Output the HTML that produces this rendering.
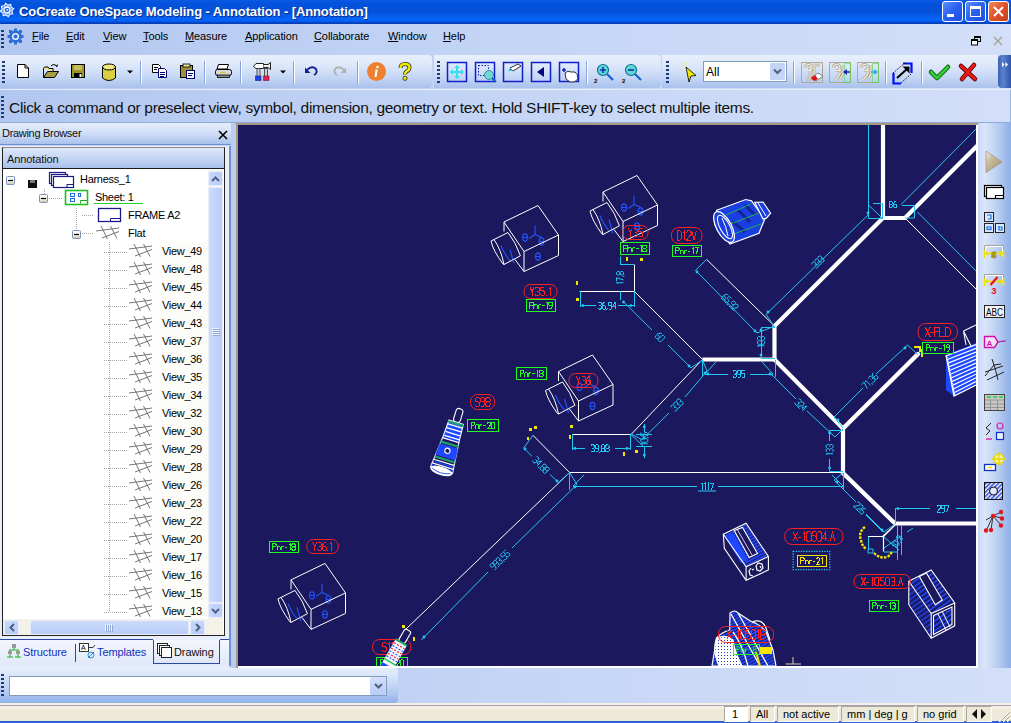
<!DOCTYPE html>
<html><head><meta charset="utf-8">
<style>
*{margin:0;padding:0;box-sizing:border-box}
html,body{width:1011px;height:723px;overflow:hidden;background:#c9d9f5;font-family:"Liberation Sans",sans-serif;position:relative}
.a{position:absolute}
svg{position:absolute;overflow:visible}
#title{left:0;top:0;width:1011px;height:24px;background:linear-gradient(#0a5ae4 0%,#0552dc 15%,#044fd6 50%,#055ae8 62%,#0664f8 80%,#0560f4 88%,#0446cc 94%,#0a3aa8 100%)}
#title .t{left:19px;top:4px;color:#fff;font-weight:bold;font-size:13px;white-space:nowrap;text-shadow:1px 1px 0 #0a2a80;letter-spacing:-0.1px}
.wb{top:1px;width:21px;height:21px;border:1px solid #fff;border-radius:3px;background:linear-gradient(135deg,#5b8ff8,#2a5ff0 50%,#1f4fe0)}
#menu{left:0;top:24px;width:1011px;height:31px;background:linear-gradient(90deg,#b2c7f0,#c4d5f5 50%,#d3dff8)}
#menu span{position:absolute;top:6px;font-size:11px;color:#000;letter-spacing:-0.1px}
#menu span u{text-decoration:underline}
#tb{left:0;top:55px;width:1011px;height:34px;background:linear-gradient(90deg,#b2c7f0,#c4d5f5 50%,#d3dff8)}
.tbar{top:0;height:33px;background:linear-gradient(#e9f0fc 0%,#dbe6fa 35%,#c3d5f5 70%,#a9c1ec 100%);border-radius:0 4px 4px 0}
.sep{top:6px;width:2px;height:23px;border-left:1px solid #8ba6d6;border-right:1px solid #fff}
.grip{width:3px;background:repeating-linear-gradient(#1f3a78 0 2px,transparent 2px 4px)}
#prompt{left:0;top:89px;width:1011px;height:34px;background:linear-gradient(90deg,#b2c7f0,#c4d5f5 50%,#d3dff8);border-top:1px solid #e6eefb;border-bottom:1px solid #8fa9d8;border-right:1px solid #9db4de}
#prompt .t{left:9px;top:8.5px;font-size:15.5px;color:#111;white-space:nowrap;letter-spacing:-0.31px}
#left{left:0;top:123px;width:236px;height:545px;background:#c5d6f4}
#canvas{left:236px;top:123px;width:742px;height:545px;background:#fff;border-left:2px solid #a89a80;border-top:2px solid #a89a80}
#cv{left:238px;top:125px;width:738px;height:541px;background:#1b185e;overflow:hidden}
#rtb{left:978px;top:123px;width:33px;height:545px;background:linear-gradient(90deg,#c9d9f6 0%,#dbe6fa 20%,#b9cef2 60%,#8eaee6 100%)}
#bot{left:0;top:668px;width:1011px;height:35px;background:#cadaf6}
#status{left:0;top:703px;width:1011px;height:20px;background:#ece9d8;border-bottom:2px solid #2f62d8}
.tree{font-size:11px;color:#000;white-space:nowrap;letter-spacing:-0.3px}
.sb2{top:3px;height:16px;border:1px solid #aca899;border-top-color:#aca899;border-right-color:#fff;border-bottom-color:#fff;background:#ece9d8;font-size:11px;line-height:15px;color:#000;white-space:nowrap;overflow:hidden}
</style></head><body>

<!-- TITLE BAR -->
<div id="title" class="a">
<svg style="left:-1px;top:2px" width="17" height="17" viewBox="0 0 17 17"><path d="M14.67 6.67L12.90 8.98L13.65 11.78L10.78 12.16L9.33 14.67L7.02 12.90L4.22 13.65L3.84 10.78L1.33 9.33L3.10 7.02L2.35 4.22L5.22 3.84L6.67 1.33L8.98 3.10L11.78 2.35L12.16 5.22Z" fill="#5a92ec" stroke="#f0f6ff" stroke-width="1.1"/><circle cx="8" cy="8" r="3" fill="#2a6ae0" stroke="#fff" stroke-width="1.3"/><circle cx="8.3" cy="7.8" r="0.9" fill="#fff"/></svg>
<div class="t a">CoCreate OneSpace Modeling - Annotation - [Annotation]</div>
<div class="a wb" style="left:942px"><div class="a" style="left:4px;top:12px;width:7px;height:3px;background:#fff"></div></div>
<div class="a wb" style="left:965px"><div class="a" style="left:4px;top:4px;width:11px;height:11px;border:1px solid #fff;border-top-width:3px"></div></div>
<div class="a wb" style="left:988px;background:linear-gradient(135deg,#f08a5e,#e0502a 50%,#c8401c)"><svg style="left:4px;top:4px" width="11" height="11"><path d="M1 1L10 10M10 1L1 10" stroke="#fff" stroke-width="2"/></svg></div>
</div>

<!-- MENU -->
<div id="menu" class="a">
<div class="a grip" style="left:1px;top:6px;height:18px"></div>
<svg style="left:7px;top:4px" width="17" height="17" viewBox="0 0 17 17">
<g fill="#2f6fd8"><circle cx="8.5" cy="8.5" r="6.2"/>
<rect x="7" y="0.5" width="3" height="4"/><rect x="7" y="12.5" width="3" height="4"/><rect x="0.5" y="7" width="4" height="3"/><rect x="12.5" y="7" width="4" height="3"/>
<rect x="2" y="2" width="3" height="3"/><rect x="12" y="2" width="3" height="3"/><rect x="2" y="12" width="3" height="3"/><rect x="12" y="12" width="3" height="3"/></g>
<circle cx="8.5" cy="8.5" r="3.6" fill="#e6efff"/><circle cx="8.5" cy="8.5" r="2" fill="#2f6fd8"/>
</svg>
<span style="left:32px"><u>F</u>ile</span>
<span style="left:66px"><u>E</u>dit</span>
<span style="left:103px"><u>V</u>iew</span>
<span style="left:143px"><u>T</u>ools</span>
<span style="left:185px"><u>M</u>easure</span>
<span style="left:245px"><u>A</u>pplication</span>
<span style="left:314px"><u>C</u>ollaborate</span>
<span style="left:388px"><u>W</u>indow</span>
<span style="left:443px"><u>H</u>elp</span>
<svg style="left:971px;top:12px" width="10" height="10"><rect x="3.5" y="0.5" width="6" height="5" fill="none" stroke="#000"/><rect x="3" y="0" width="7" height="2" fill="#000"/><rect x="0.5" y="3.5" width="6" height="5.5" fill="#fff" stroke="#000"/><rect x="0" y="3" width="7" height="2" fill="#000"/></svg>
<svg style="left:993px;top:12px" width="10" height="10"><path d="M1 1L9 9M9 1L1 9" stroke="#a8a290" stroke-width="1.4"/></svg>
</div>

<!-- TOOLBAR -->
<div id="tb" class="a">
<div class="a tbar" style="left:0;width:432px"></div>
<div class="a tbar" style="left:434px;width:227px"></div>
<div class="a tbar" style="left:662px;width:337px"></div>
<div class="a" style="left:998px;top:0;width:13px;height:33px;background:linear-gradient(90deg,#3a64b8,#5a82cc 40%,#2c55a8);border-radius:4px 0 0 4px"></div>
<svg style="left:1002px;top:7px" width="7" height="5"><path d="M0 0L2.5 2.5L0 5ZM3.5 0L6 2.5L3.5 5Z" fill="#fff"/></svg>
<div class="a grip" style="left:2px;top:6px;height:22px"></div>
<div class="a grip" style="left:437px;top:6px;height:22px"></div>
<div class="a grip" style="left:666px;top:6px;height:22px"></div>
<svg style="left:0;top:0" width="1011" height="37" viewBox="0 55 1011 37">
<!-- separators -->
<g stroke="#8aa5d5" stroke-width="1">
<path d="M140.5 61V84M204.5 61V84M240.5 61V84M293.5 61V84M357.5 61V84M586.5 61V84M793.5 61V84M885.5 61V84M921.5 61V84"/>
</g>
<g stroke="#fff" stroke-width="1">
<path d="M141.5 61V84M205.5 61V84M241.5 61V84M294.5 61V84M358.5 61V84M587.5 61V84M794.5 61V84M886.5 61V84M922.5 61V84"/>
</g>
<!-- new doc -->
<path d="M17.5 64.5H25L28.5 68V77.5H17.5Z" fill="#fff" stroke="#000"/>
<path d="M25 64.5V68H28.5" fill="none" stroke="#000"/>
<!-- open folder -->
<path d="M43.5 68.5V77.5H54.5L58.5 71.5H47.5L43.5 77.5" fill="#a8a040" stroke="#000"/>
<path d="M43.5 68.5L44.5 67H48L49 68.5H53V71.5" fill="#f4e880" stroke="#000"/>
<path d="M51 66Q54 63 57 66.5M55.5 65.5L57 66.5L57.5 64.5" fill="none" stroke="#000" stroke-width="1"/>
<!-- save floppy -->
<rect x="71.5" y="64.5" width="13" height="13" fill="#a09628" stroke="#000"/>
<rect x="74" y="65" width="8" height="5" fill="#c8c060"/>
<rect x="74" y="73" width="8" height="4.5" fill="#000"/>
<rect x="79.5" y="74" width="2" height="3" fill="#fff"/>
<!-- cylinder -->
<path d="M102.5 67V78Q109 83 115.5 78V67" fill="#d8d040" stroke="#000"/>
<ellipse cx="109" cy="67" rx="6.5" ry="3" fill="#f0e880" stroke="#000"/>
<path d="M127 70.5H133L130 73.5Z" fill="#000"/>
<!-- copy -->
<path d="M152.5 64.5H158.5L160.5 66.5V72.5H152.5Z" fill="#fff" stroke="#000"/>
<path d="M154 67.5H158M154 69.5H157" stroke="#000"/>
<path d="M158.5 68.5H164.5L166.5 70.5V77.5H158.5Z" fill="#fff" stroke="#00006a"/>
<path d="M160 72.5H165M160 74.5H165M160 76.5H164" stroke="#00006a"/>
<!-- paste -->
<rect x="180.5" y="65.5" width="12" height="12" fill="#9c9040" stroke="#000"/>
<rect x="183" y="64" width="7" height="3" fill="#e8e0a0" stroke="#000" stroke-width="0.8"/>
<rect x="186.5" y="70.5" width="8" height="8" fill="#fff" stroke="#00006a"/>
<path d="M188 73.5H193M188 75.5H192" stroke="#00006a"/>
<!-- printer -->
<path d="M218.5 64.5H228.5L227 69H217Z" fill="#fff" stroke="#000"/>
<rect x="215.5" y="69.5" width="16" height="6" rx="2" fill="#d8d8d8" stroke="#000"/>
<rect x="217.5" y="75" width="12" height="2.5" fill="#888" stroke="#000" stroke-width="0.8"/>
<path d="M220 72.5H226" stroke="#d8c840" stroke-width="1.2"/>
<!-- tools -->
<path d="M253.5 66.5L256 63.5H263.5V68.5H256Z" fill="#fff" stroke="#222" stroke-width="1"/>
<path d="M263.5 64.5H268L270.5 62.5V69.5L268 67.5H263.5" fill="#eee" stroke="#222" stroke-width="1"/>
<rect x="257" y="68.5" width="3" height="8" fill="#ccc" stroke="#333" stroke-width="0.8"/>
<rect x="264.5" y="68.5" width="3" height="8" fill="#ccc" stroke="#333" stroke-width="0.8"/>
<rect x="255.5" y="76" width="5.5" height="4.5" fill="#2040e8" stroke="#102080" stroke-width="0.6"/>
<rect x="263.5" y="76" width="5.5" height="4.5" fill="#e02050" stroke="#801030" stroke-width="0.6"/>
<path d="M280 70.5H286L283 73.5Z" fill="#000"/>
<!-- undo/redo -->
<path d="M307 70Q312 65 316 69Q318 73 314 75" fill="none" stroke="#10208a" stroke-width="1.8"/>
<path d="M305 67.5V73H310.5Z" fill="#10208a"/>
<path d="M344 70Q339 65 335 69Q333 73 337 75" fill="none" stroke="#b0b0b0" stroke-width="1.8"/>
<path d="M346 67.5V73H340.5Z" fill="#b0b0b0"/>
<!-- info -->
<circle cx="376.5" cy="71.5" r="9.5" fill="#ee8030"/>
<path d="M375.5 69.5H377.8L376.5 77H374.5Z" fill="#fff"/>
<circle cx="377.5" cy="67" r="1.3" fill="#fff"/>
<!-- help -->
<path d="M400.5 68Q400.5 64 405 64Q409.5 64 409.5 67.5Q409.5 70 406.5 71.5Q405 72.5 405 74.5" fill="none" stroke="#333" stroke-width="4"/>
<path d="M400.5 68Q400.5 64 405 64Q409.5 64 409.5 67.5Q409.5 70 406.5 71.5Q405 72.5 405 74.5" fill="none" stroke="#f0ec00" stroke-width="2.4"/>
<circle cx="405" cy="78.3" r="2.1" fill="#f0ec00" stroke="#333" stroke-width="0.9"/>
<!-- view boxes -->
<g fill="none" stroke="#1020c8" stroke-width="1.5">
<rect x="447.5" y="62.5" width="19" height="19"/>
<rect x="475.5" y="62.5" width="19" height="19"/>
<rect x="503.5" y="62.5" width="19" height="19"/>
<rect x="531.5" y="62.5" width="19" height="19"/>
<rect x="559.5" y="62.5" width="19" height="19"/>
</g>
<g fill="#30e0f0">
<path d="M457 65L460 68H454Z M457 79L460 76H454Z M450 72L453 69V75Z M464 72L461 69V75Z"/>
<rect x="456" y="67" width="2" height="10"/><rect x="452" y="71" width="10" height="2"/>
</g>
<rect x="478.5" y="65.5" width="10" height="10" fill="none" stroke="#1020c8" stroke-dasharray="1.5 1.5"/>
<circle cx="489" cy="75" r="4.5" fill="#70d8d0" stroke="#3090a0"/>
<path d="M492 78L496 82" stroke="#1060d0" stroke-width="2"/>
<path d="M510 68L518 64L521 66L513 71Z" fill="#fff" stroke="#000" stroke-width="0.8"/>
<path d="M510 68L513 71L508 71Z" fill="#40c0e0"/>
<path d="M537 72L544 67V77Z" fill="#000080"/>
<path d="M562 70H566M564 68V72" stroke="#1020c8" stroke-width="1.5"/>
<path d="M565 73Q568 70 571 72L575 72Q578 74 578 79Q575 83 570 82L566 79Z" fill="#fff" stroke="#000" stroke-width="0.8"/>
<!-- zoom -->
<circle cx="603" cy="70" r="5.5" fill="#60d8d0" stroke="#0a70a0" stroke-width="1.2"/>
<path d="M600 70H606M603 67V73" stroke="#1030b0" stroke-width="1.6"/>
<path d="M607 74L613 80" stroke="#1060d0" stroke-width="2.2"/>
<text x="594" y="83" font-size="6" font-weight="bold" fill="#000">2</text>
<circle cx="631" cy="70" r="5.5" fill="#60d8d0" stroke="#0a70a0" stroke-width="1.2"/>
<path d="M628 70H634" stroke="#1030b0" stroke-width="1.6"/>
<path d="M635 74L641 80" stroke="#1060d0" stroke-width="2.2"/>
<text x="622" y="83" font-size="6" font-weight="bold" fill="#000">2</text>
<!-- cursor -->
<path d="M686 67L696 75.5L691 76L689 82Z" fill="#f0e800" stroke="#000" stroke-width="0.8"/>
<path d="M682 66L684 63M681 71L683 70M687 62L686 65" stroke="#e8e070" stroke-width="0.8"/>
<!-- dropdown -->
<rect x="703.5" y="61.5" width="83" height="20" fill="#fff" stroke="#7f9db9"/>
<rect x="770" y="63" width="15" height="17" rx="1" fill="#c4d4f6"/>
<path d="M774 69.5L777.5 73L781 69.5" fill="none" stroke="#4d6185" stroke-width="2"/>
<text x="706" y="76" font-size="12" fill="#000">All</text>
<!-- annotation icons -->
<g fill="none" stroke="#b0a890" stroke-width="1">
<rect x="801.5" y="62.5" width="21" height="20"/>
<rect x="829.5" y="62.5" width="21" height="20"/>
<rect x="857.5" y="62.5" width="21" height="20"/>
</g>
<g fill="none" stroke="#a89c80" stroke-width="2.6"><path d="M805 68Q805 64.5 808.5 64.5Q812 64.5 812 68Q812 71 808 70.5M806 79H810V66M813 65H820M814 65V78"/>
<path d="M833 68Q833 64.5 836.5 64.5Q840 64.5 840 68Q840 71 836 70.5M840 68V74L835 80M843 65V74L840 79"/>
<path d="M861 68Q861 64.5 864.5 64.5Q868 64.5 868 68Q868 71 864 70.5M868 68V74L863 80M871 65V74L868 79"/></g><g fill="none" stroke="#f4f2ea" stroke-width="1.2"><path d="M805 68Q805 64.5 808.5 64.5Q812 64.5 812 68Q812 71 808 70.5M806 79H810V66M813 65H820M814 65V78"/>
<path d="M833 68Q833 64.5 836.5 64.5Q840 64.5 840 68Q840 71 836 70.5M840 68V74L835 80M843 65V74L840 79"/>
<path d="M861 68Q861 64.5 864.5 64.5Q868 64.5 868 68Q868 71 864 70.5M868 68V74L863 80M871 65V74L868 79"/></g>
<path d="M811 78L818 73L823 76L816 81Z" fill="#fff" stroke="#666" stroke-width="0.8"/>
<path d="M811 78L815 75L818 79L814 81Z" fill="#e01010"/>
<rect x="844.5" y="63.5" width="6" height="19" fill="none" stroke="#30e030" stroke-dasharray="1 1"/>
<path d="M843 72L847 69V75Z" fill="#2020c0"/><path d="M846 72H850" stroke="#2020c0" stroke-width="1.5"/>
<rect x="872.5" y="63.5" width="6" height="19" fill="none" stroke="#30e030" stroke-dasharray="1 1"/>
<path d="M878 72L874 69V75Z" fill="#40a0f0"/><path d="M871 72H875" stroke="#40a0f0" stroke-width="1.5"/>
<!-- arrow icon -->
<path d="M893.5 73V83.5H901" stroke="#0010f0" stroke-width="2.2" fill="none"/>
<path d="M903 63.5H911.5V73" stroke="#0010f0" stroke-width="2.2" fill="none"/>
<path d="M893 73L905 63M901 83L911 74" stroke="#000" stroke-width="1" stroke-dasharray="1.2 1.2"/>
<path d="M897 78L907 69" stroke="#000" stroke-width="2"/>
<path d="M902.5 66.5H909.5V73.5Z" fill="#000"/>
<!-- check / cross -->
<path d="M931 72L937 78L948 67" fill="none" stroke="#004000" stroke-width="4.5" stroke-linecap="round" stroke-linejoin="round"/>
<path d="M931 72L937 78L948 67" fill="none" stroke="#30d030" stroke-width="3" stroke-linecap="round" stroke-linejoin="round"/>
<path d="M961 66L975 79M974 65L962 79" stroke="#600000" stroke-width="4.5" stroke-linecap="round"/>
<path d="M961 66L975 79M974 65L962 79" stroke="#e81818" stroke-width="3" stroke-linecap="round"/>
</svg>


</div>

<!-- PROMPT -->
<div id="prompt" class="a"><div class="a grip" style="left:1px;top:6px;height:24px"></div><div class="t a">Click a command or preselect view, symbol, dimension, geometry or text. Hold SHIFT-key to select multiple items.</div></div>

<!-- LEFT PANEL -->
<div id="left" class="a">
<div class="a" style="left:0;top:0;width:232px;height:22px;background:linear-gradient(#e6eefb,#ccdbf6 55%,#a9c1ec);border-bottom:1px solid #6f8fcf"></div>
<div class="a" style="left:2px;top:4px;font-size:11px;letter-spacing:-0.3px;color:#111">Drawing Browser</div>
<svg style="left:218px;top:7px" width="10" height="10"><path d="M1 1L9 9M9 1L1 9" stroke="#000" stroke-width="1.6"/></svg>
<div class="a" style="left:0;top:23px;width:229px;height:522px;background:#e9eefa"></div>
<div class="a" style="left:229px;top:23px;width:2px;height:520px;background:#6f8fcf"></div>
<div class="a" style="left:231px;top:0px;width:5px;height:545px;background:#b9cdf1"></div>
<div class="a" style="left:2px;top:24px;width:223px;height:489px;border:1px solid #222;border-top-color:#8a8a8a;background:#fff"></div>
<div class="a" style="left:3px;top:25px;width:221px;height:21px;background:linear-gradient(#dfe8fa,#c2d4f4 55%,#a8c0ec);border-bottom:1px solid #1a1a1a"></div>
<div class="a" style="left:7px;top:30px;font-size:11px;letter-spacing:-0.1px;color:#111">Annotation</div>
<svg style="left:0;top:0" width="236" height="545" viewBox="0 123 236 545">
<rect x="159" y="242" width="49" height="377" fill="#fcfcf8"/>
<g stroke="#a8a8a8" stroke-width="1" stroke-dasharray="1 1" fill="none">
<path d="M44.5 189V194M49 198.5H63M76.5 208V230M82 215.5H94M82 233.5H94M109.5 242V612"/>
<path d="M104 252.5H127"/>
<path d="M104 270.5H127"/>
<path d="M104 288.5H127"/>
<path d="M104 306.5H127"/>
<path d="M104 324.5H127"/>
<path d="M104 342.5H127"/>
<path d="M104 360.5H127"/>
<path d="M104 378.5H127"/>
<path d="M104 396.5H127"/>
<path d="M104 414.5H127"/>
<path d="M104 432.5H127"/>
<path d="M104 450.5H127"/>
<path d="M104 468.5H127"/>
<path d="M104 486.5H127"/>
<path d="M104 504.5H127"/>
<path d="M104 522.5H127"/>
<path d="M104 540.5H127"/>
<path d="M104 558.5H127"/>
<path d="M104 576.5H127"/>
<path d="M104 594.5H127"/>
<path d="M104 612.5H127"/>
</g>
<defs><linearGradient id="bxg" x1="0" y1="0" x2="0" y2="1"><stop offset="0" stop-color="#fff"/><stop offset="0.6" stop-color="#f0efe8"/><stop offset="1" stop-color="#c8c2a8"/></linearGradient></defs>
<rect x="6.5" y="176.5" width="8" height="8" rx="1" fill="url(#bxg)" stroke="#7b93b8"/><path d="M8 180.5H13" stroke="#000" stroke-width="1.2"/>
<rect x="39.5" y="194.5" width="8" height="8" rx="1" fill="url(#bxg)" stroke="#7b93b8"/><path d="M41 198.5H46" stroke="#000" stroke-width="1.2"/>
<rect x="72.5" y="230.5" width="8" height="8" rx="1" fill="url(#bxg)" stroke="#7b93b8"/><path d="M74 234.5H79" stroke="#000" stroke-width="1.2"/>
<rect x="28" y="180" width="9" height="8" fill="#111"/><rect x="30" y="180" width="5" height="3" fill="#777"/>
<g fill="#fff" stroke="#1a1a8a" stroke-width="1.2"><rect x="49.5" y="172.5" width="16" height="11"/><rect x="51.5" y="174.5" width="16" height="11"/><rect x="53.5" y="176.5" width="20" height="11"/></g>
<path d="M67 187.5V184.5H73.5" fill="none" stroke="#1a1a8a"/>
<rect x="65.5" y="190.5" width="22" height="14" fill="#fff" stroke="#20c020" stroke-width="1.6"/>
<g fill="none" stroke="#1a6ad8"><rect x="70.5" y="193.5" width="4" height="3"/><rect x="78.5" y="193.5" width="2" height="3"/><rect x="70.5" y="198.5" width="4" height="3"/></g>
<path d="M80.5 203.5V200.5H87" fill="none" stroke="#20a020"/>
<path d="M94 203.5H143" stroke="#20d020" stroke-width="1.2"/>
<rect x="98.5" y="208.5" width="22" height="13" fill="#fff" stroke="#1a1a8a" stroke-width="1.3"/><path d="M110.5 221.5V218.5H120.5" fill="none" stroke="#1a1a8a"/>
<path d="M96 231L119 228M102 238L119 231.5M101 226L107.5 239M110.5 226L117 238.5" stroke="#666" stroke-width="0.9" fill="none"/>
<path d="M129 249L152 246M135 256L152 249.5M134 244L140.5 257M143.5 244L150 256.5" stroke="#666" stroke-width="0.9" fill="none"/>
<path d="M129 267L152 264M135 274L152 267.5M134 262L140.5 275M143.5 262L150 274.5" stroke="#666" stroke-width="0.9" fill="none"/>
<path d="M129 285L152 282M135 292L152 285.5M134 280L140.5 293M143.5 280L150 292.5" stroke="#666" stroke-width="0.9" fill="none"/>
<path d="M129 303L152 300M135 310L152 303.5M134 298L140.5 311M143.5 298L150 310.5" stroke="#666" stroke-width="0.9" fill="none"/>
<path d="M129 321L152 318M135 328L152 321.5M134 316L140.5 329M143.5 316L150 328.5" stroke="#666" stroke-width="0.9" fill="none"/>
<path d="M129 339L152 336M135 346L152 339.5M134 334L140.5 347M143.5 334L150 346.5" stroke="#666" stroke-width="0.9" fill="none"/>
<path d="M129 357L152 354M135 364L152 357.5M134 352L140.5 365M143.5 352L150 364.5" stroke="#666" stroke-width="0.9" fill="none"/>
<path d="M129 375L152 372M135 382L152 375.5M134 370L140.5 383M143.5 370L150 382.5" stroke="#666" stroke-width="0.9" fill="none"/>
<path d="M129 393L152 390M135 400L152 393.5M134 388L140.5 401M143.5 388L150 400.5" stroke="#666" stroke-width="0.9" fill="none"/>
<path d="M129 411L152 408M135 418L152 411.5M134 406L140.5 419M143.5 406L150 418.5" stroke="#666" stroke-width="0.9" fill="none"/>
<path d="M129 429L152 426M135 436L152 429.5M134 424L140.5 437M143.5 424L150 436.5" stroke="#666" stroke-width="0.9" fill="none"/>
<path d="M129 447L152 444M135 454L152 447.5M134 442L140.5 455M143.5 442L150 454.5" stroke="#666" stroke-width="0.9" fill="none"/>
<path d="M129 465L152 462M135 472L152 465.5M134 460L140.5 473M143.5 460L150 472.5" stroke="#666" stroke-width="0.9" fill="none"/>
<path d="M129 483L152 480M135 490L152 483.5M134 478L140.5 491M143.5 478L150 490.5" stroke="#666" stroke-width="0.9" fill="none"/>
<path d="M129 501L152 498M135 508L152 501.5M134 496L140.5 509M143.5 496L150 508.5" stroke="#666" stroke-width="0.9" fill="none"/>
<path d="M129 519L152 516M135 526L152 519.5M134 514L140.5 527M143.5 514L150 526.5" stroke="#666" stroke-width="0.9" fill="none"/>
<path d="M129 537L152 534M135 544L152 537.5M134 532L140.5 545M143.5 532L150 544.5" stroke="#666" stroke-width="0.9" fill="none"/>
<path d="M129 555L152 552M135 562L152 555.5M134 550L140.5 563M143.5 550L150 562.5" stroke="#666" stroke-width="0.9" fill="none"/>
<path d="M129 573L152 570M135 580L152 573.5M134 568L140.5 581M143.5 568L150 580.5" stroke="#666" stroke-width="0.9" fill="none"/>
<path d="M129 591L152 588M135 598L152 591.5M134 586L140.5 599M143.5 586L150 598.5" stroke="#666" stroke-width="0.9" fill="none"/>
<path d="M129 609L152 606M135 616L152 609.5M134 604L140.5 617M143.5 604L150 616.5" stroke="#666" stroke-width="0.9" fill="none"/>
</svg>
<div class="a tree" style="left:80px;top:50px">Harness_1</div>
<div class="a tree" style="left:95px;top:68px">Sheet: 1</div>
<div class="a tree" style="left:128px;top:86px">FRAME A2</div>
<div class="a tree" style="left:128px;top:104px">Flat</div>
<div class="a tree vw" style="left:162px;top:122px">View_49</div>
<div class="a tree vw" style="left:162px;top:140px">View_48</div>
<div class="a tree vw" style="left:162px;top:158px">View_45</div>
<div class="a tree vw" style="left:162px;top:176px">View_44</div>
<div class="a tree vw" style="left:162px;top:194px">View_43</div>
<div class="a tree vw" style="left:162px;top:212px">View_37</div>
<div class="a tree vw" style="left:162px;top:230px">View_36</div>
<div class="a tree vw" style="left:162px;top:248px">View_35</div>
<div class="a tree vw" style="left:162px;top:266px">View_34</div>
<div class="a tree vw" style="left:162px;top:284px">View_32</div>
<div class="a tree vw" style="left:162px;top:302px">View_30</div>
<div class="a tree vw" style="left:162px;top:320px">View_29</div>
<div class="a tree vw" style="left:162px;top:338px">View_28</div>
<div class="a tree vw" style="left:162px;top:356px">View_26</div>
<div class="a tree vw" style="left:162px;top:374px">View_23</div>
<div class="a tree vw" style="left:162px;top:392px">View_22</div>
<div class="a tree vw" style="left:162px;top:410px">View_20</div>
<div class="a tree vw" style="left:162px;top:428px">View_17</div>
<div class="a tree vw" style="left:162px;top:446px">View_16</div>
<div class="a tree vw" style="left:162px;top:464px">View_15</div>
<div class="a tree vw" style="left:162px;top:482px">View_13</div>
<div class="a" style="left:208px;top:47px;width:15px;height:449px;background:#f3f1e8"></div>
<div class="a" style="left:208px;top:48px;width:15px;height:15px;border-radius:2px;background:linear-gradient(90deg,#c9d8fb,#b8cdf8);border:1px solid #e8eefc"></div>
<svg style="left:211px;top:53px" width="9" height="6"><path d="M1 5L4.5 1.5L8 5" stroke="#4d6185" stroke-width="2" fill="none"/></svg>
<div class="a" style="left:208px;top:64px;width:15px;height:416px;border-radius:2px;background:linear-gradient(90deg,#cbdafc,#b9cdf9);border:1px solid #e8eefc"></div>
<svg style="left:212px;top:205px" width="8" height="8"><path d="M0 0.5H7M0 2.5H7M0 4.5H7M0 6.5H7" stroke="#eef3fe" stroke-width="1"/><path d="M1 1.5H8M1 3.5H8M1 5.5H8M1 7.5H8" stroke="#8fa8d8" stroke-width="1"/></svg>
<div class="a" style="left:208px;top:480px;width:15px;height:15px;border-radius:2px;background:linear-gradient(90deg,#c9d8fb,#b8cdf8);border:1px solid #e8eefc"></div>
<svg style="left:211px;top:485px" width="9" height="6"><path d="M1 1L4.5 4.5L8 1" stroke="#4d6185" stroke-width="2" fill="none"/></svg>
<div class="a" style="left:3px;top:496px;width:220px;height:16px;background:#f3f1e8"></div>
<div class="a" style="left:4px;top:497px;width:15px;height:15px;border-radius:2px;background:linear-gradient(#c9d8fb,#b8cdf8);border:1px solid #e8eefc"></div>
<svg style="left:9px;top:500px" width="6" height="9"><path d="M5 1L1.5 4.5L5 8" stroke="#4d6185" stroke-width="2" fill="none"/></svg>
<div class="a" style="left:30px;top:497px;width:159px;height:15px;border-radius:2px;background:linear-gradient(#cbdafc,#b9cdf9);border:1px solid #e8eefc"></div>
<svg style="left:105px;top:501px" width="8" height="8"><path d="M0.5 0V7M2.5 0V7M4.5 0V7M6.5 0V7" stroke="#eef3fe"/><path d="M1.5 1V8M3.5 1V8M5.5 1V8M7.5 1V8" stroke="#8fa8d8"/></svg>
<div class="a" style="left:190px;top:497px;width:15px;height:15px;border-radius:2px;background:linear-gradient(#c9d8fb,#b8cdf8);border:1px solid #e8eefc"></div>
<svg style="left:195px;top:500px" width="6" height="9"><path d="M1 1L4.5 4.5L1 8" stroke="#4d6185" stroke-width="2" fill="none"/></svg>
<div class="a" style="left:0;top:517px;width:229px;height:26px;background:linear-gradient(#f3f6fd,#dfe8fa)"></div>
<div class="a" style="left:153px;top:517px;width:67px;height:24px;background:linear-gradient(#f4f7fd,#dfe7f8);border:1px solid #2a4aa0;border-top:none"></div>
<div class="a" style="left:0;top:516px;width:153px;height:1px;background:#2a4aa0"></div>
<div class="a" style="left:220px;top:516px;width:9px;height:1px;background:#2a4aa0"></div>
<div class="a" style="left:75px;top:521px;width:1px;height:18px;background:#2a4aa0"></div>
<div class="a" style="left:23px;top:523px;font-size:11px;letter-spacing:-0.1px;color:#1030c0">Structure</div>
<div class="a" style="left:97px;top:523px;font-size:11px;letter-spacing:-0.1px;color:#1030c0">Templates</div>
<div class="a" style="left:174px;top:523px;font-size:11px;letter-spacing:-0.1px;color:#111">Drawing</div>
<svg style="left:0;top:0" width="236" height="545" viewBox="0 123 236 545"><rect x="12" y="644" width="4" height="4" fill="#999"/><rect x="8" y="651" width="4" height="3" fill="#999"/><rect x="16" y="651" width="4" height="3" fill="#999"/><path d="M14 648V650M9 650H19M10 650V651M18 650V651M7 657H13M15 657H21M10 654V657M18 654V657" stroke="#20b020" fill="none"/><rect x="79.5" y="643.5" width="9" height="8" fill="#fff" stroke="#333"/><text x="81" y="650" font-size="7" fill="#000">A</text><path d="M88.5 647.5H93L95 645M88.5 647.5H93" stroke="#333" fill="none"/><circle cx="91" cy="655" r="3" fill="none" stroke="#2a8ad8"/><path d="M88 658L94 652" stroke="#2a8ad8"/><rect x="157.5" y="643.5" width="10" height="10" fill="#fff" stroke="#222"/><rect x="159.5" y="645.5" width="10" height="10" fill="#fff" stroke="#222"/><rect x="161.5" y="647.5" width="10" height="10" fill="#fff" stroke="#222"/></svg>
</div>

<div id="canvas" class="a"></div>
<div id="cv" class="a"><svg style="left:0;top:0" width="738" height="541" viewBox="238 125 738 541">
<rect x="238" y="125" width="738" height="541" fill="#1b185e"/>
<g fill="none" stroke="#2456ff" stroke-width="1.1"><path d="M535.0 225.5L535.0 234.5M535.0 234.5L529.0 238.5M535.0 234.5L542.0 237.5"/><ellipse cx="525.0" cy="237.5" rx="2.4" ry="3.6"/><path d="M522.6 237.5L527.4 237.5"/><ellipse cx="541.5" cy="241.5" rx="2.4" ry="3.6"/><path d="M539.1 241.5L543.9 241.5"/><ellipse cx="538.0" cy="256.5" rx="2.4" ry="3.6"/><path d="M535.6 256.5L540.4 256.5"/><path d="M501.0 245.5Q505.0 255.5 510.0 260.5M510.0 249.5L514.0 263.5"/></g><g fill="none" stroke="#ffffff" stroke-width="1" stroke-linejoin="round"><path d="M538.0 205.5L504.0 222.0L524.0 251.5L558.5 235.0Z"/><path d="M558.5 235.0L558.5 255.5L524.0 271.5L524.0 251.5"/><path d="M504.0 222.0L504.0 231.5M515.0 259.5L524.0 271.5"/><path d="M491.0 241.0L508.0 232.5Q516.0 242.5 520.4 255.8L504.0 264.5L503.0 264.0Q493.0 250.5 491.0 241.0Z"/><path d="M494.0 239.5Q501.0 249.5 504.0 264.5"/></g>
<g fill="none" stroke="#2456ff" stroke-width="1.1"><path d="M634.0 195.5L634.0 204.5M634.0 204.5L628.0 208.5M634.0 204.5L641.0 207.5"/><ellipse cx="624.0" cy="207.5" rx="2.4" ry="3.6"/><path d="M621.6 207.5L626.4 207.5"/><ellipse cx="640.5" cy="211.5" rx="2.4" ry="3.6"/><path d="M638.1 211.5L642.9 211.5"/><ellipse cx="637.0" cy="226.5" rx="2.4" ry="3.6"/><path d="M634.6 226.5L639.4 226.5"/><path d="M600.0 215.5Q604.0 225.5 609.0 230.5M609.0 219.5L613.0 233.5"/></g><g fill="none" stroke="#ffffff" stroke-width="1" stroke-linejoin="round"><path d="M637.0 175.5L603.0 192.0L623.0 221.5L657.5 205.0Z"/><path d="M657.5 205.0L657.5 225.5L623.0 241.5L623.0 221.5"/><path d="M603.0 192.0L603.0 201.5M614.0 229.5L623.0 241.5"/><path d="M590.0 211.0L607.0 202.5Q615.0 212.5 619.4 225.8L603.0 234.5L602.0 234.0Q592.0 220.5 590.0 211.0Z"/><path d="M593.0 209.5Q600.0 219.5 603.0 234.5"/></g>
<g fill="none" stroke="#2456ff" stroke-width="1.1"><path d="M589.5 375.0L589.5 384.0M589.5 384.0L583.5 388.0M589.5 384.0L596.5 387.0"/><ellipse cx="579.5" cy="387.0" rx="2.4" ry="3.6"/><path d="M577.1 387.0L581.9 387.0"/><ellipse cx="596.0" cy="391.0" rx="2.4" ry="3.6"/><path d="M593.6 391.0L598.4 391.0"/><ellipse cx="592.5" cy="406.0" rx="2.4" ry="3.6"/><path d="M590.1 406.0L594.9 406.0"/><path d="M555.5 395.0Q559.5 405.0 564.5 410.0M564.5 399.0L568.5 413.0"/></g><g fill="none" stroke="#ffffff" stroke-width="1" stroke-linejoin="round"><path d="M592.5 355.0L558.5 371.5L578.5 401.0L613.0 384.5Z"/><path d="M613.0 384.5L613.0 405.0L578.5 421.0L578.5 401.0"/><path d="M558.5 371.5L558.5 381.0M569.5 409.0L578.5 421.0"/><path d="M545.5 390.5L562.5 382.0Q570.5 392.0 574.9 405.3L558.5 414.0L557.5 413.5Q547.5 400.0 545.5 390.5Z"/><path d="M548.5 389.0Q555.5 399.0 558.5 414.0"/></g>
<g fill="none" stroke="#2456ff" stroke-width="1.1"><path d="M322.0 583.4L322.0 592.4M322.0 592.4L316.0 596.4M322.0 592.4L329.0 595.4"/><ellipse cx="312.0" cy="595.4" rx="2.4" ry="3.6"/><path d="M309.6 595.4L314.4 595.4"/><ellipse cx="328.5" cy="599.4" rx="2.4" ry="3.6"/><path d="M326.1 599.4L330.9 599.4"/><ellipse cx="325.0" cy="614.4" rx="2.4" ry="3.6"/><path d="M322.6 614.4L327.4 614.4"/><path d="M288.0 603.4Q292.0 613.4 297.0 618.4M297.0 607.4L301.0 621.4"/></g><g fill="none" stroke="#ffffff" stroke-width="1" stroke-linejoin="round"><path d="M325.0 563.4L291.0 579.9L311.0 609.4L345.5 592.9Z"/><path d="M345.5 592.9L345.5 613.4L311.0 629.4L311.0 609.4"/><path d="M291.0 579.9L291.0 589.4M302.0 617.4L311.0 629.4"/><path d="M278.0 598.9L295.0 590.4Q303.0 600.4 307.4 613.7L291.0 622.4L290.0 621.9Q280.0 608.4 278.0 598.9Z"/><path d="M281.0 597.4Q288.0 607.4 291.0 622.4"/></g>
<g fill="none" stroke="#ffffff" stroke-width="4.2" stroke-linejoin="miter">
<path d="M883 120V218H905L985 138"/>
<path d="M883 218L774.5 326V359.5H702.5"/>
<path d="M774.5 359.5L843 428.5V473L895 523.5H990"/>
</g>
<path d="M843 428.5L918 354" stroke="#ffffff" stroke-width="4.4" stroke-linecap="round"/>
<g fill="none" stroke="#ffffff" stroke-width="1">
<path d="M706.6 259.4L774.5 326"/>
<path d="M905 218L985 298"/>
<path d="M634.5 264.6V291.5H579.6M634.5 291.5L702.5 359.5L631 434.5H572"/>
<path d="M533 435.3L569.6 472.5H843M569.6 472.5L405 630"/>
</g>
<g fill="none" stroke="#22c8f4" stroke-width="1">
<path d="M868.5 120V218.5H883"/>
<path d="M873 203.5H882.5V218"/>
<path d="M868.5 205L882 218"/>
<path d="M868 215L766 314.4L774 326"/>
<path d="M901 204.6L985 120"/>
<path d="M902 205.5H914.5V218L905 218"/>
<path d="M917.4 212L985 280"/>
<path d="M706.6 259.4L695.5 270.3L757 333"/>
<path d="M757 333L775 326"/>
<path d="M761.5 327V358M761 327.5H775M761 358.5H775"/>
<path d="M702.5 360V377M775.5 360V377M705 374.5H728M750 374.5H773"/>
<path d="M705 374L716 362M773 374L762 362"/>
<path d="M770 373L796 399M807 411L835 437M835 437L843 429"/>
<path d="M829.5 430V441M829.5 459V471.4M829.5 430.5H843M829.5 471.5H843"/>
<path d="M569.5 473V490M843.5 473V490M573 486.5H697M718 486.5H843"/>
<path d="M573 486L584 475M843 486L832 475"/>
<path d="M834 417L863 388M876 374L907.7 345M834 417L843 428"/>
<path d="M907.7 345L918 355"/>
<path d="M843 473L834 480L856 502M866 514L884 532L895 524"/>
<path d="M895.5 509V524M895 508.5H930M956 508.5H985"/>
<path d="M624 302.3L652 330M668 345L691 367.8L702.5 360"/>
<path d="M631 434L642 439.6L669 413M685 397L707 371L702.5 360"/>
<path d="M580.5 291V307M634.5 291V307M580 305.5H596M618 305.5H634"/>
<path d="M620.5 256.6V265M620 264.5H634M620.5 291V300"/>
<path d="M572.5 434V450M630.5 434V450M572 448.5H585M615 448.5H630"/>
<path d="M644.5 424V432M644.5 446V458M630.5 434L644 447M636 434.5H652M636 446.5H652"/>
<path d="M533 435.3L523.7 448L532 456.3M550 474.3L558.5 482.8L569.6 472.5"/>
<path d="M421.3 640L488 572M512 548L577 484.5L569.6 472.5"/>
<path d="M868.5 536V549M897.5 525V560M901.5 525V555M884 537L899 550M884 548L901 536M866 515L883 532M907 532L913 528M884 552H898M868 549H873V553H868Z"/>
</g>
<g fill="#22c8f4">
<circle cx="697" cy="272" r="1.4"/>
<circle cx="755" cy="331" r="1.4"/>
<circle cx="868" cy="213" r="1.4"/>
<circle cx="768" cy="312" r="1.4"/>
<circle cx="761" cy="330" r="1.4"/>
<circle cx="761" cy="355" r="1.4"/>
<circle cx="708" cy="374" r="1.4"/>
<circle cx="770" cy="374" r="1.4"/>
<circle cx="829.6" cy="433" r="1.4"/>
<circle cx="829.6" cy="468" r="1.4"/>
<circle cx="583" cy="305.6" r="1.4"/>
<circle cx="631" cy="305.6" r="1.4"/>
<circle cx="575" cy="448.4" r="1.4"/>
<circle cx="627" cy="448.4" r="1.4"/>
<circle cx="644.3" cy="427" r="1.4"/>
<circle cx="644.3" cy="455" r="1.4"/>
<circle cx="525" cy="449" r="1.4"/>
<circle cx="557" cy="481" r="1.4"/>
<circle cx="424" cy="637" r="1.4"/>
<circle cx="575" cy="487" r="1.4"/>
<circle cx="838" cy="420" r="1.4"/>
<circle cx="905" cy="348" r="1.4"/>
<circle cx="898" cy="508.6" r="1.4"/>
<circle cx="623.5" cy="302" r="1.4"/>
<circle cx="689" cy="366" r="1.4"/>
<circle cx="644" cy="438" r="1.4"/>
<circle cx="705" cy="373" r="1.4"/>
<circle cx="837" cy="482" r="1.4"/>
<circle cx="882" cy="530" r="1.4"/>
</g>
<g transform="translate(818 262) rotate(-45)" fill="none" stroke="#22c8f4" stroke-width="1.0" vector-effect="non-scaling-stroke" stroke-linejoin="round"><path vector-effect="non-scaling-stroke" transform="translate(-5.95 -3.50) scale(0.875)" d="M0 1L1 0H3L4 1V3L3 4H1.5M3 4L4 5V7L3 8H1L0 7"/><path vector-effect="non-scaling-stroke" transform="translate(-1.75 -3.50) scale(0.875)" d="M0 1L1 0H3L4 1V3L3 4H1.5M3 4L4 5V7L3 8H1L0 7"/><path vector-effect="non-scaling-stroke" transform="translate(2.45 -3.50) scale(0.875)" d="M0 1L1 0H3L4 1V3L3 4H1.5M3 4L4 5V7L3 8H1L0 7"/></g>
<g transform="translate(893 204.5) rotate(0)" fill="none" stroke="#22c8f4" stroke-width="1.0" vector-effect="non-scaling-stroke" stroke-linejoin="round" shape-rendering="crispEdges"><path vector-effect="non-scaling-stroke" transform="translate(-3.60 -3.00) scale(0.750)" d="M1 0H3L4 1V3L3 4H1L0 5V7L1 8H3L4 7V5L3 4H1L0 3V1Z"/><path vector-effect="non-scaling-stroke" transform="translate(0.60 -3.00) scale(0.750)" d="M3.5 0H2L0 3V7L1 8H3L4 7V5L3 4H0.5"/></g>
<g transform="translate(730 302) rotate(45)" fill="none" stroke="#22c8f4" stroke-width="1.0" vector-effect="non-scaling-stroke" stroke-linejoin="round"><path vector-effect="non-scaling-stroke" transform="translate(-9.06 -3.50) scale(0.875)" d="M3.5 0H2L0 3V7L1 8H3L4 7V5L3 4H0.5"/><path vector-effect="non-scaling-stroke" transform="translate(-4.86 -3.50) scale(0.875)" d="M4 0H0.5L0 3.5H3L4 4.5V7L3 8H1L0 7"/><path vector-effect="non-scaling-stroke" transform="translate(-1.53 -3.50) scale(0.875)" d="M2 7L1.5 9"/><path vector-effect="non-scaling-stroke" transform="translate(1.36 -3.50) scale(0.875)" d="M4 3L3 4H1L0 3V1L1 0H3L4 1V5L3 8H0.5"/><path vector-effect="non-scaling-stroke" transform="translate(5.56 -3.50) scale(0.875)" d="M0 1.5L1 0H3L4 1.5V3L0 8H4"/></g>
<g transform="translate(761 342) rotate(-90)" fill="none" stroke="#22c8f4" stroke-width="1.0" vector-effect="non-scaling-stroke" stroke-linejoin="round"><path vector-effect="non-scaling-stroke" transform="translate(-5.47 -3.50) scale(0.875)" d="M1 1.5L2 0V8"/><path vector-effect="non-scaling-stroke" transform="translate(-2.23 -3.50) scale(0.875)" d="M0 1L1 0H3L4 1V7L3 8H1L0 7Z"/><path vector-effect="non-scaling-stroke" transform="translate(1.97 -3.50) scale(0.875)" d="M0 1L1 0H3L4 1V3L3 4H1.5M3 4L4 5V7L3 8H1L0 7"/></g>
<g transform="translate(739 374) rotate(0)" fill="none" stroke="#22c8f4" stroke-width="1.0" vector-effect="non-scaling-stroke" stroke-linejoin="round" shape-rendering="crispEdges"><path vector-effect="non-scaling-stroke" transform="translate(-5.95 -3.50) scale(0.875)" d="M0 1L1 0H3L4 1V3L3 4H1.5M3 4L4 5V7L3 8H1L0 7"/><path vector-effect="non-scaling-stroke" transform="translate(-1.75 -3.50) scale(0.875)" d="M4 3L3 4H1L0 3V1L1 0H3L4 1V5L3 8H0.5"/><path vector-effect="non-scaling-stroke" transform="translate(2.45 -3.50) scale(0.875)" d="M4 0H0.5L0 3.5H3L4 4.5V7L3 8H1L0 7"/></g>
<g transform="translate(801 405) rotate(45)" fill="none" stroke="#22c8f4" stroke-width="1.0" vector-effect="non-scaling-stroke" stroke-linejoin="round"><path vector-effect="non-scaling-stroke" transform="translate(-5.95 -3.50) scale(0.875)" d="M0 1L1 0H3L4 1V3L3 4H1.5M3 4L4 5V7L3 8H1L0 7"/><path vector-effect="non-scaling-stroke" transform="translate(-1.75 -3.50) scale(0.875)" d="M0 1.5L1 0H3L4 1.5V3L0 8H4"/><path vector-effect="non-scaling-stroke" transform="translate(2.45 -3.50) scale(0.875)" d="M3 8V0L0 5.5H4"/></g>
<g transform="translate(829.6 450) rotate(-90)" fill="none" stroke="#22c8f4" stroke-width="1.0" vector-effect="non-scaling-stroke" stroke-linejoin="round"><path vector-effect="non-scaling-stroke" transform="translate(-5.47 -3.50) scale(0.875)" d="M1 1.5L2 0V8"/><path vector-effect="non-scaling-stroke" transform="translate(-2.23 -3.50) scale(0.875)" d="M0 1L1 0H3L4 1V3L3 4H1.5M3 4L4 5V7L3 8H1L0 7"/><path vector-effect="non-scaling-stroke" transform="translate(1.97 -3.50) scale(0.875)" d="M0 1L1 0H3L4 1V3L3 4H1.5M3 4L4 5V7L3 8H1L0 7"/></g>
<g transform="translate(707 486.5) rotate(0)" fill="none" stroke="#22c8f4" stroke-width="1.0" vector-effect="non-scaling-stroke" stroke-linejoin="round" shape-rendering="crispEdges"><path vector-effect="non-scaling-stroke" transform="translate(-6.60 -3.50) scale(0.875)" d="M1 1.5L2 0V8"/><path vector-effect="non-scaling-stroke" transform="translate(-3.37 -3.50) scale(0.875)" d="M1 1.5L2 0V8"/><path vector-effect="non-scaling-stroke" transform="translate(-0.13 -3.50) scale(0.875)" d="M1 1.5L2 0V8"/><path vector-effect="non-scaling-stroke" transform="translate(3.10 -3.50) scale(0.875)" d="M0 0H4L1.5 8"/></g>
<path d="M698 491H716" stroke="#22c8f4"/>
<g transform="translate(870 381) rotate(-45)" fill="none" stroke="#22c8f4" stroke-width="1.0" vector-effect="non-scaling-stroke" stroke-linejoin="round"><path vector-effect="non-scaling-stroke" transform="translate(-8.58 -3.50) scale(0.875)" d="M0 0H4L1.5 8"/><path vector-effect="non-scaling-stroke" transform="translate(-4.38 -3.50) scale(0.875)" d="M1 1.5L2 0V8"/><path vector-effect="non-scaling-stroke" transform="translate(-2.02 -3.50) scale(0.875)" d="M2 7L1.5 9"/><path vector-effect="non-scaling-stroke" transform="translate(0.87 -3.50) scale(0.875)" d="M0 1L1 0H3L4 1V3L3 4H1.5M3 4L4 5V7L3 8H1L0 7"/><path vector-effect="non-scaling-stroke" transform="translate(5.07 -3.50) scale(0.875)" d="M3.5 0H2L0 3V7L1 8H3L4 7V5L3 4H0.5"/></g>
<g transform="translate(860 508) rotate(45)" fill="none" stroke="#22c8f4" stroke-width="1.0" vector-effect="non-scaling-stroke" stroke-linejoin="round"><path vector-effect="non-scaling-stroke" transform="translate(-5.95 -3.50) scale(0.875)" d="M0 1.5L1 0H3L4 1.5V3L0 8H4"/><path vector-effect="non-scaling-stroke" transform="translate(-1.75 -3.50) scale(0.875)" d="M0 1.5L1 0H3L4 1.5V3L0 8H4"/><path vector-effect="non-scaling-stroke" transform="translate(2.45 -3.50) scale(0.875)" d="M3.5 0H2L0 3V7L1 8H3L4 7V5L3 4H0.5"/></g>
<g transform="translate(943 508.6) rotate(0)" fill="none" stroke="#22c8f4" stroke-width="1.0" vector-effect="non-scaling-stroke" stroke-linejoin="round" shape-rendering="crispEdges"><path vector-effect="non-scaling-stroke" transform="translate(-5.95 -3.50) scale(0.875)" d="M0 1.5L1 0H3L4 1.5V3L0 8H4"/><path vector-effect="non-scaling-stroke" transform="translate(-1.75 -3.50) scale(0.875)" d="M4 3L3 4H1L0 3V1L1 0H3L4 1V5L3 8H0.5"/><path vector-effect="non-scaling-stroke" transform="translate(2.45 -3.50) scale(0.875)" d="M0 0H4L1.5 8"/></g>
<g transform="translate(660 337) rotate(45)" fill="none" stroke="#22c8f4" stroke-width="1.0" vector-effect="non-scaling-stroke" stroke-linejoin="round"><path vector-effect="non-scaling-stroke" transform="translate(-3.85 -3.50) scale(0.875)" d="M3.5 0H2L0 3V7L1 8H3L4 7V5L3 4H0.5"/><path vector-effect="non-scaling-stroke" transform="translate(0.35 -3.50) scale(0.875)" d="M0 1L1 0H3L4 1V7L3 8H1L0 7Z"/></g>
<g transform="translate(677 405) rotate(-45)" fill="none" stroke="#22c8f4" stroke-width="1.0" vector-effect="non-scaling-stroke" stroke-linejoin="round"><path vector-effect="non-scaling-stroke" transform="translate(-5.95 -3.50) scale(0.875)" d="M0 1L1 0H3L4 1V3L3 4H1.5M3 4L4 5V7L3 8H1L0 7"/><path vector-effect="non-scaling-stroke" transform="translate(-1.75 -3.50) scale(0.875)" d="M0 1L1 0H3L4 1V3L3 4H1.5M3 4L4 5V7L3 8H1L0 7"/><path vector-effect="non-scaling-stroke" transform="translate(2.45 -3.50) scale(0.875)" d="M0 1L1 0H3L4 1V3L3 4H1.5M3 4L4 5V7L3 8H1L0 7"/></g>
<g transform="translate(607 305.6) rotate(0)" fill="none" stroke="#22c8f4" stroke-width="1.0" vector-effect="non-scaling-stroke" stroke-linejoin="round" shape-rendering="crispEdges"><path vector-effect="non-scaling-stroke" transform="translate(-9.06 -3.50) scale(0.875)" d="M0 1L1 0H3L4 1V3L3 4H1.5M3 4L4 5V7L3 8H1L0 7"/><path vector-effect="non-scaling-stroke" transform="translate(-4.86 -3.50) scale(0.875)" d="M3.5 0H2L0 3V7L1 8H3L4 7V5L3 4H0.5"/><path vector-effect="non-scaling-stroke" transform="translate(-1.53 -3.50) scale(0.875)" d="M2 7L1.5 9"/><path vector-effect="non-scaling-stroke" transform="translate(1.36 -3.50) scale(0.875)" d="M4 3L3 4H1L0 3V1L1 0H3L4 1V5L3 8H0.5"/><path vector-effect="non-scaling-stroke" transform="translate(5.56 -3.50) scale(0.875)" d="M3 8V0L0 5.5H4"/></g>
<g transform="translate(620 278) rotate(-90)" fill="none" stroke="#22c8f4" stroke-width="1.0" vector-effect="non-scaling-stroke" stroke-linejoin="round"><path vector-effect="non-scaling-stroke" transform="translate(-6.47 -3.50) scale(0.875)" d="M1 1.5L2 0V8"/><path vector-effect="non-scaling-stroke" transform="translate(-3.24 -3.50) scale(0.875)" d="M0 0H4L1.5 8"/><path vector-effect="non-scaling-stroke" transform="translate(0.08 -3.50) scale(0.875)" d="M2 7L1.5 9"/><path vector-effect="non-scaling-stroke" transform="translate(2.98 -3.50) scale(0.875)" d="M1 0H3L4 1V3L3 4H1L0 5V7L1 8H3L4 7V5L3 4H1L0 3V1Z"/></g>
<g transform="translate(600 448.4) rotate(0)" fill="none" stroke="#22c8f4" stroke-width="1.0" vector-effect="non-scaling-stroke" stroke-linejoin="round" shape-rendering="crispEdges"><path vector-effect="non-scaling-stroke" transform="translate(-9.06 -3.50) scale(0.875)" d="M0 1L1 0H3L4 1V3L3 4H1.5M3 4L4 5V7L3 8H1L0 7"/><path vector-effect="non-scaling-stroke" transform="translate(-4.86 -3.50) scale(0.875)" d="M4 3L3 4H1L0 3V1L1 0H3L4 1V5L3 8H0.5"/><path vector-effect="non-scaling-stroke" transform="translate(-1.53 -3.50) scale(0.875)" d="M2 7L1.5 9"/><path vector-effect="non-scaling-stroke" transform="translate(1.36 -3.50) scale(0.875)" d="M1 0H3L4 1V3L3 4H1L0 5V7L1 8H3L4 7V5L3 4H1L0 3V1Z"/><path vector-effect="non-scaling-stroke" transform="translate(5.56 -3.50) scale(0.875)" d="M1 0H3L4 1V3L3 4H1L0 5V7L1 8H3L4 7V5L3 4H1L0 3V1Z"/></g>
<g transform="translate(644.3 439) rotate(-90)" fill="none" stroke="#22c8f4" stroke-width="1.0" vector-effect="non-scaling-stroke" stroke-linejoin="round"><path vector-effect="non-scaling-stroke" transform="translate(-6.47 -3.50) scale(0.875)" d="M1 1.5L2 0V8"/><path vector-effect="non-scaling-stroke" transform="translate(-3.24 -3.50) scale(0.875)" d="M0 1L1 0H3L4 1V7L3 8H1L0 7Z"/><path vector-effect="non-scaling-stroke" transform="translate(0.08 -3.50) scale(0.875)" d="M2 7L1.5 9"/><path vector-effect="non-scaling-stroke" transform="translate(2.98 -3.50) scale(0.875)" d="M4 0H0.5L0 3.5H3L4 4.5V7L3 8H1L0 7"/></g>
<g transform="translate(541 465) rotate(45)" fill="none" stroke="#22c8f4" stroke-width="1.0" vector-effect="non-scaling-stroke" stroke-linejoin="round"><path vector-effect="non-scaling-stroke" transform="translate(-9.06 -3.50) scale(0.875)" d="M0 1L1 0H3L4 1V3L3 4H1.5M3 4L4 5V7L3 8H1L0 7"/><path vector-effect="non-scaling-stroke" transform="translate(-4.86 -3.50) scale(0.875)" d="M3 8V0L0 5.5H4"/><path vector-effect="non-scaling-stroke" transform="translate(-1.53 -3.50) scale(0.875)" d="M2 7L1.5 9"/><path vector-effect="non-scaling-stroke" transform="translate(1.36 -3.50) scale(0.875)" d="M1 0H3L4 1V3L3 4H1L0 5V7L1 8H3L4 7V5L3 4H1L0 3V1Z"/><path vector-effect="non-scaling-stroke" transform="translate(5.56 -3.50) scale(0.875)" d="M1 0H3L4 1V3L3 4H1L0 5V7L1 8H3L4 7V5L3 4H1L0 3V1Z"/></g>
<g transform="translate(500 560) rotate(-44)" fill="none" stroke="#22c8f4" stroke-width="1.0" vector-effect="non-scaling-stroke" stroke-linejoin="round"><path vector-effect="non-scaling-stroke" transform="translate(-11.16 -3.50) scale(0.875)" d="M4 3L3 4H1L0 3V1L1 0H3L4 1V5L3 8H0.5"/><path vector-effect="non-scaling-stroke" transform="translate(-6.96 -3.50) scale(0.875)" d="M4 3L3 4H1L0 3V1L1 0H3L4 1V5L3 8H0.5"/><path vector-effect="non-scaling-stroke" transform="translate(-2.76 -3.50) scale(0.875)" d="M0 1L1 0H3L4 1V3L3 4H1.5M3 4L4 5V7L3 8H1L0 7"/><path vector-effect="non-scaling-stroke" transform="translate(0.57 -3.50) scale(0.875)" d="M2 7L1.5 9"/><path vector-effect="non-scaling-stroke" transform="translate(3.46 -3.50) scale(0.875)" d="M4 0H0.5L0 3.5H3L4 4.5V7L3 8H1L0 7"/><path vector-effect="non-scaling-stroke" transform="translate(7.66 -3.50) scale(0.875)" d="M4 0H0.5L0 3.5H3L4 4.5V7L3 8H1L0 7"/></g>
<g transform="translate(897 542) rotate(-60)" fill="none" stroke="#22c8f4" stroke-width="1.0" vector-effect="non-scaling-stroke" stroke-linejoin="round"><path vector-effect="non-scaling-stroke" transform="translate(-6.22 -3.00) scale(0.750)" d="M1 1.5L2 0V8"/><path vector-effect="non-scaling-stroke" transform="translate(-2.99 -3.00) scale(0.750)" d="M0 1L1 0H3L4 1V7L3 8H1L0 7Z"/><path vector-effect="non-scaling-stroke" transform="translate(0.46 -3.00) scale(0.750)" d="M2 7L1.5 9"/><path vector-effect="non-scaling-stroke" transform="translate(3.23 -3.00) scale(0.750)" d="M0 1.5L1 0H3L4 1.5V3L0 8H4"/></g>
<g fill="#f4e400">
<rect x="626" y="257" width="2" height="4" fill="#f4e400"/>
<rect x="640" y="258" width="3" height="3" fill="#f4e400"/>
<rect x="576" y="281" width="2" height="4" fill="#f4e400"/>
<rect x="576" y="298" width="3" height="3" fill="#f4e400"/>
<rect x="529" y="428" width="3" height="3" fill="#f4e400"/>
<rect x="534" y="426" width="3" height="3" fill="#f4e400"/>
<rect x="527" y="437" width="2" height="3" fill="#f4e400"/>
<rect x="570" y="425" width="3" height="3" fill="#f4e400"/>
<rect x="569" y="435" width="2" height="4" fill="#f4e400"/>
<rect x="623" y="452" width="2" height="4" fill="#f4e400"/>
<rect x="635" y="450" width="3" height="3" fill="#f4e400"/>
<rect x="402" y="625" width="3" height="3" fill="#f4e400"/>
<rect x="413" y="637" width="2" height="4" fill="#f4e400"/>
</g>
<path d="M865 527Q858 532 861 540Q862 546 866 549M874 553Q880 559 887 557Q891 555 892 551" fill="none" stroke="#f4e400" stroke-width="2.4" stroke-dasharray="2.5 1.2"/>
<path d="M895 525L883.5 536.5V551.5M883.5 536.5H868M893 527L882 537" fill="none" stroke="#ffffff" stroke-width="1.2"/>
<path d="M914 347H920V352M922 349V357" fill="none" stroke="#f4e400" stroke-width="2"/>
<path d="M716.6 210.3L745.7 199.5L751.5 200.8L764.8 219L759 233.2L729.9 244L716.6 224.9Z" fill="#1a3ee0" stroke="#ffffff" stroke-width="1.2"/>
<path d="M738 210L750 222M733 222L745 232M745 205L755 215" stroke="#101a70" stroke-width="3" opacity="0.7"/>
<path d="M726 215L751 204M728 225L759 213M731 235L761 224" stroke="#20b060" stroke-width="1"/>
<ellipse cx="724" cy="227" rx="7.5" ry="17" transform="rotate(-28 724 227)" fill="#1a3ee0" stroke="#ffffff" stroke-width="1.3"/>
<ellipse cx="725" cy="227" rx="5" ry="13" transform="rotate(-28 725 227)" fill="none" stroke="#ffffff" stroke-width="1.1"/>
<path d="M722 218Q726 226 728 236" fill="none" stroke="#ffffff" stroke-width="1"/>
<path d="M754.8 202.4L763 202L770.6 213.2L766.4 218.2L763 219Z" fill="#1a3ee0" stroke="#ffffff" stroke-width="1.2"/>
<path d="M758 203L766 216" stroke="#ffffff" stroke-width="1"/>
<g transform="translate(-6 -1) rotate(17 455 445)">
<rect x="452" y="408" width="7" height="14" rx="3" fill="#1b185e" stroke="#ffffff" stroke-width="1.1"/>
<path d="M448 422H463L464 441H447Z" fill="#1e48ff" stroke="#ffffff" stroke-width="1.1"/>
<path d="M448 426H463M448 430H463M448 434H463M448 438H464" stroke="#ffffff" stroke-width="1.3"/>
<path d="M447.5 423.5H463.5" stroke="#20a070" stroke-width="2.2"/>
<path d="M447 441H464L467 472H444Z" fill="#1b185e" stroke="#ffffff" stroke-width="1.1"/>
<path d="M446 445H465" stroke="#20a070" stroke-width="2.2"/>
<path d="M446 447H465L466 459H445Z" fill="#1e48ff"/>
<circle cx="455.5" cy="452" r="2.6" fill="#1b185e" stroke="#ffffff" stroke-width="1.1"/>
<path d="M445 461H466" stroke="#20a070" stroke-width="2.2"/>
<path d="M445 464H466M444.5 468H466.5" stroke="#ffffff" stroke-width="1.2"/>
<path d="M445 466H466M444.5 470H466.5" stroke="#1e48ff" stroke-width="1.4"/>
<ellipse cx="455.5" cy="473" rx="11.5" ry="4.2" fill="#fff"/>
<path d="M446 473Q455 477 465 473" stroke="#1e48ff" stroke-width="0.8" fill="none"/>
</g>
<path d="M946 355L976 343V384L954 396L946 390Z" fill="#1e48ff"/>
<path d="M946.0 356.0L976 344.6M946.0 356.0l1.5 2.2" stroke="#ffffff" stroke-width="1.2" fill="none"/>
<path d="M946.8 359.7L976 348.3M946.8 359.7l1.5 2.2" stroke="#ffffff" stroke-width="1.2" fill="none"/>
<path d="M947.5 363.4L976 352.0M947.5 363.4l1.5 2.2" stroke="#ffffff" stroke-width="1.2" fill="none"/>
<path d="M948.2 367.1L976 355.7M948.2 367.1l1.5 2.2" stroke="#ffffff" stroke-width="1.2" fill="none"/>
<path d="M949.0 370.8L976 359.4M949.0 370.8l1.5 2.2" stroke="#ffffff" stroke-width="1.2" fill="none"/>
<path d="M949.8 374.5L976 363.1M949.8 374.5l1.5 2.2" stroke="#ffffff" stroke-width="1.2" fill="none"/>
<path d="M950.5 378.2L976 366.8M950.5 378.2l1.5 2.2" stroke="#ffffff" stroke-width="1.2" fill="none"/>
<path d="M951.2 381.9L976 370.5M951.2 381.9l1.5 2.2" stroke="#ffffff" stroke-width="1.2" fill="none"/>
<path d="M952.0 385.6L976 374.2M952.0 385.6l1.5 2.2" stroke="#ffffff" stroke-width="1.2" fill="none"/>
<path d="M952.8 389.3L976 377.9M952.8 389.3l1.5 2.2" stroke="#ffffff" stroke-width="1.2" fill="none"/>
<path d="M953.5 393.0L976 381.6M953.5 393.0l1.5 2.2" stroke="#ffffff" stroke-width="1.2" fill="none"/>
<path d="M946 355L954 396L976 385" fill="none" stroke="#ffffff" stroke-width="1.2"/>
<path d="M963.5 331L976 325M963.5 331L966 345M963.5 331L971 346" fill="none" stroke="#ffffff" stroke-width="1.1"/>
<defs><pattern id="btex" width="3" height="3" patternUnits="userSpaceOnUse" patternTransform="rotate(-28)"><rect width="3" height="3" fill="#1b185e"/><rect width="3" height="1.8" fill="#1e48ff"/></pattern><pattern id="btex2" width="4" height="4" patternUnits="userSpaceOnUse" patternTransform="rotate(55)"><rect width="4" height="4" fill="#1b185e"/><rect width="1.6" height="4" fill="#1e48ff"/></pattern></defs>
<path d="M724 535L746 524L767 556L746 566Z" fill="url(#btex)"/>
<path d="M725 537L733 533L748 560L741 563Z" fill="#1e48ff"/>
<path d="M723.3 534.2L746.1 523.3L768.4 556.5V570L746.1 580.3L724.3 548.2Z" fill="none" stroke="#ffffff" stroke-width="1.1"/>
<path d="M723.3 534.2L746.1 566.8L768.4 556.5M746.1 566.8V580.3" fill="none" stroke="#ffffff" stroke-width="1.1"/>
<path d="M734.2 530.6L742.5 527.4L757.5 553.4L749.2 557.5Z" fill="#1b185e" stroke="#ffffff" stroke-width="1.1"/>
<path d="M737 529L752 555" stroke="#ffffff" stroke-width="0.8"/>
<path d="M751 568L749 571L750 575L753 576M752 570L754 569M758 563L756 566L757 570L760 571L763 568L762 564Z M760 566L761 568" fill="none" stroke="#ffffff" stroke-width="1.2"/>
<path d="M909 582L931 571L953 603L931 613Z" fill="url(#btex2)"/>
<path d="M909 583L909 604L931 637V614Z" fill="url(#btex2)" opacity="0.8"/>
<path d="M908.8 581.2L931.2 570L954.7 602.9V625.8L931.2 638.2L908.8 604.7Z" fill="none" stroke="#ffffff" stroke-width="1.1"/>
<path d="M908.8 581.2L931.2 613.5L954.7 602.9M931.2 613.5V638.2" fill="none" stroke="#ffffff" stroke-width="1.1"/>
<path d="M919.4 576.5L926.4 573L942.3 600L935.3 604.7Z" fill="#1b185e" stroke="#ffffff" stroke-width="1.1"/>
<path d="M933.5 615.5L952 607V624.5L933.5 634.5Z" fill="url(#btex2)" stroke="#ffffff" stroke-width="1.1"/>
<path d="M938 614L946 630M942 611L950 627" stroke="#ffffff" stroke-width="1"/>
<defs><pattern id="wdots" width="3" height="3" patternUnits="userSpaceOnUse"><rect width="3" height="3" fill="#ffffff"/><rect x="1" y="1" width="1" height="1" fill="#2040c0"/></pattern></defs>
<path d="M716.6 638Q722 632 729.7 630L730 613Q735 609 738 613L752 622Q760 624 766 632L773 650L776 666H712Z" fill="url(#btex)" stroke="#ffffff" stroke-width="1.2"/>
<path d="M716.6 638Q712 650 719 666H742Q734 650 733 640Q726 634 716.6 638Z" fill="url(#wdots)" stroke="#ffffff" stroke-width="1.2"/>
<path d="M731 614L760 666M738 613L768 666M733 632Q742 644 748 666" fill="none" stroke="#ffffff" stroke-width="1.3"/>
<path d="M752 622Q762 618 766 628L770 640" fill="none" stroke="#ffffff" stroke-width="1.2"/>
<path d="M760 648H771V653H760Z M756 652L760 666" fill="#f4e400" stroke="#f4e400" stroke-width="2"/>
<path d="M785.5 664H801M793 657V664" stroke="#d8d0a0" stroke-width="1"/>
<path d="M531.0 284.5H550.0C554.5 284.5 557.0 287.3 557.0 291.5C557.0 295.7 554.5 298.5 550.0 298.5H531.0C526.5 298.5 524.0 295.7 524.0 291.5C524.0 287.3 526.5 284.5 531.0 284.5Z" fill="none" stroke="#ff2020" stroke-width="1"/><g transform="translate(540.5 291.5) rotate(0)" fill="none" stroke="#ff2020" stroke-width="1.0" vector-effect="non-scaling-stroke" stroke-linejoin="round" shape-rendering="crispEdges"><path vector-effect="non-scaling-stroke" transform="translate(-10.51 -4.06) scale(1.015)" d="M0 0L2 4L4 0M2 4V8"/><path vector-effect="non-scaling-stroke" transform="translate(-5.29 -4.06) scale(1.015)" d="M0 1L1 0H3L4 1V3L3 4H1.5M3 4L4 5V7L3 8H1L0 7"/><path vector-effect="non-scaling-stroke" transform="translate(-0.07 -4.06) scale(1.015)" d="M4 0H0.5L0 3.5H3L4 4.5V7L3 8H1L0 7"/><path vector-effect="non-scaling-stroke" transform="translate(4.13 -4.06) scale(1.015)" d="M1.5 7.2V8"/><path vector-effect="non-scaling-stroke" transform="translate(7.65 -4.06) scale(1.015)" d="M1 1.5L2 0V8"/></g>
<path d="M630.0 225.5H641.0C645.5 225.5 648.0 228.3 648.0 232.5C648.0 236.7 645.5 239.5 641.0 239.5H630.0C625.5 239.5 623.0 236.7 623.0 232.5C623.0 228.3 625.5 225.5 630.0 225.5Z" fill="none" stroke="#ff2020" stroke-width="1"/><g transform="translate(635.5 232.5) rotate(0)" fill="none" stroke="#ff2020" stroke-width="1.0" vector-effect="non-scaling-stroke" stroke-linejoin="round" shape-rendering="crispEdges"><path vector-effect="non-scaling-stroke" transform="translate(-7.33 -4.06) scale(1.015)" d="M0 0L2 4L4 0M2 4V8"/><path vector-effect="non-scaling-stroke" transform="translate(-2.03 -4.06) scale(1.015)" d="M0 1L1 0H3L4 1V3L3 4H1.5M3 4L4 5V7L3 8H1L0 7"/><path vector-effect="non-scaling-stroke" transform="translate(3.27 -4.06) scale(1.015)" d="M4 0H0.5L0 3.5H3L4 4.5V7L3 8H1L0 7"/></g>
<path d="M679.4 227.5H694.0C699.2 227.5 702.0 230.7 702.0 235.5C702.0 240.3 699.2 243.5 694.0 243.5H679.4C674.2 243.5 671.4 240.3 671.4 235.5C671.4 230.7 674.2 227.5 679.4 227.5Z" fill="none" stroke="#ff2020" stroke-width="1"/><g transform="translate(686.7 235.5) rotate(0)" fill="none" stroke="#ff2020" stroke-width="1.0" vector-effect="non-scaling-stroke" stroke-linejoin="round" shape-rendering="crispEdges"><path vector-effect="non-scaling-stroke" transform="translate(-9.66 -4.64) scale(1.160)" d="M0 0H2.5L4 1.5V6.5L2.5 8H0Z"/><path vector-effect="non-scaling-stroke" transform="translate(-4.36 -4.64) scale(1.160)" d="M1 1.5L2 0V8"/><path vector-effect="non-scaling-stroke" transform="translate(-0.28 -4.64) scale(1.160)" d="M0 1.5L1 0H3L4 1.5V3L0 8H4"/><path vector-effect="non-scaling-stroke" transform="translate(5.02 -4.64) scale(1.160)" d="M0 0L2 8L4 0"/></g>
<path d="M576.0 373.5H591.0C595.5 373.5 598.0 376.3 598.0 380.5C598.0 384.7 595.5 387.5 591.0 387.5H576.0C571.5 387.5 569.0 384.7 569.0 380.5C569.0 376.3 571.5 373.5 576.0 373.5Z" fill="none" stroke="#ff2020" stroke-width="1"/><g transform="translate(583.5 380.5) rotate(0)" fill="none" stroke="#ff2020" stroke-width="1.0" vector-effect="non-scaling-stroke" stroke-linejoin="round" shape-rendering="crispEdges"><path vector-effect="non-scaling-stroke" transform="translate(-7.33 -4.06) scale(1.015)" d="M0 0L2 4L4 0M2 4V8"/><path vector-effect="non-scaling-stroke" transform="translate(-2.03 -4.06) scale(1.015)" d="M0 1L1 0H3L4 1V3L3 4H1.5M3 4L4 5V7L3 8H1L0 7"/><path vector-effect="non-scaling-stroke" transform="translate(3.27 -4.06) scale(1.015)" d="M3.5 0H2L0 3V7L1 8H3L4 7V5L3 4H0.5"/></g>
<path d="M478.0 394.5H487.2C492.1 394.5 494.7 397.5 494.7 402.0C494.7 406.5 492.1 409.5 487.2 409.5H478.0C473.1 409.5 470.5 406.5 470.5 402.0C470.5 397.5 473.1 394.5 478.0 394.5Z" fill="none" stroke="#ff2020" stroke-width="1"/><g transform="translate(482.6 402.0) rotate(0)" fill="none" stroke="#ff2020" stroke-width="1.0" vector-effect="non-scaling-stroke" stroke-linejoin="round" shape-rendering="crispEdges"><path vector-effect="non-scaling-stroke" transform="translate(-7.47 -4.35) scale(1.087)" d="M4 1L3 0H1L0 1V3L1 4H3L4 5V7L3 8H1L0 7"/><path vector-effect="non-scaling-stroke" transform="translate(-2.17 -4.35) scale(1.087)" d="M4 3L3 4H1L0 3V1L1 0H3L4 1V5L3 8H0.5"/><path vector-effect="non-scaling-stroke" transform="translate(3.12 -4.35) scale(1.087)" d="M1 0H3L4 1V3L3 4H1L0 5V7L1 8H3L4 7V5L3 4H1L0 3V1Z"/></g>
<path d="M313.8 539.5H331.3C335.9 539.5 338.3 542.3 338.3 546.5C338.3 550.7 335.9 553.5 331.3 553.5H313.8C309.2 553.5 306.8 550.7 306.8 546.5C306.8 542.3 309.2 539.5 313.8 539.5Z" fill="none" stroke="#ff2020" stroke-width="1"/><g transform="translate(322.55 546.5) rotate(0)" fill="none" stroke="#ff2020" stroke-width="1.0" vector-effect="non-scaling-stroke" stroke-linejoin="round" shape-rendering="crispEdges"><path vector-effect="non-scaling-stroke" transform="translate(-9.98 -4.06) scale(1.015)" d="M0 0L2 4L4 0M2 4V8"/><path vector-effect="non-scaling-stroke" transform="translate(-5.09 -4.06) scale(1.015)" d="M0 1L1 0H3L4 1V3L3 4H1.5M3 4L4 5V7L3 8H1L0 7"/><path vector-effect="non-scaling-stroke" transform="translate(-0.20 -4.06) scale(1.015)" d="M3.5 0H2L0 3V7L1 8H3L4 7V5L3 4H0.5"/><path vector-effect="non-scaling-stroke" transform="translate(3.68 -4.06) scale(1.015)" d="M1.5 7.2V8"/><path vector-effect="non-scaling-stroke" transform="translate(7.05 -4.06) scale(1.015)" d="M1 1.5L2 0V8"/></g>
<path d="M380.1 639.5H403.3C408.2 639.5 410.8 642.5 410.8 647.0C410.8 651.5 408.2 654.5 403.3 654.5H380.1C375.2 654.5 372.6 651.5 372.6 647.0C372.6 642.5 375.2 639.5 380.1 639.5Z" fill="none" stroke="#ff2020" stroke-width="1"/><g transform="translate(391.70000000000005 647.0) rotate(0)" fill="none" stroke="#ff2020" stroke-width="1.0" vector-effect="non-scaling-stroke" stroke-linejoin="round" shape-rendering="crispEdges"><path vector-effect="non-scaling-stroke" transform="translate(-9.51 -4.35) scale(1.087)" d="M4 1L3 0H1L0 1V3L1 4H3L4 5V7L3 8H1L0 7"/><path vector-effect="non-scaling-stroke" transform="translate(-4.21 -4.35) scale(1.087)" d="M1 1.5L2 0V8"/><path vector-effect="non-scaling-stroke" transform="translate(-0.14 -4.35) scale(1.087)" d="M0 1.5L1 0H3L4 1.5V3L0 8H4"/><path vector-effect="non-scaling-stroke" transform="translate(5.16 -4.35) scale(1.087)" d="M0 1L1 0H3L4 1V7L3 8H1L0 7Z"/></g>
<path d="M926.5 323.5H948.9C954.4 323.5 957.4 326.9 957.4 332.0C957.4 337.1 954.4 340.5 948.9 340.5H926.5C921.0 340.5 918.0 337.1 918.0 332.0C918.0 326.9 921.0 323.5 926.5 323.5Z" fill="none" stroke="#ff2020" stroke-width="1"/><g transform="translate(937.7 332.0) rotate(0)" fill="none" stroke="#ff2020" stroke-width="1.0" vector-effect="non-scaling-stroke" stroke-linejoin="round" shape-rendering="crispEdges"><path vector-effect="non-scaling-stroke" transform="translate(-12.45 -4.93) scale(1.232)" d="M0 0L4 8M4 0L0 8"/><path vector-effect="non-scaling-stroke" transform="translate(-8.39 -4.93) scale(1.232)" d="M0.5 4.5H3.5"/><path vector-effect="non-scaling-stroke" transform="translate(-3.08 -4.93) scale(1.232)" d="M0 8V0H3L4 1V3L3 4H0"/><path vector-effect="non-scaling-stroke" transform="translate(2.22 -4.93) scale(1.232)" d="M0 0V8H4"/><path vector-effect="non-scaling-stroke" transform="translate(7.52 -4.93) scale(1.232)" d="M0 0H2.5L4 1.5V6.5L2.5 8H0Z"/></g>
<path d="M792.8 528.5H834.9C840.1 528.5 842.9 531.7 842.9 536.5C842.9 541.3 840.1 544.5 834.9 544.5H792.8C787.6 544.5 784.8 541.3 784.8 536.5C784.8 531.7 787.6 528.5 792.8 528.5Z" fill="none" stroke="#ff2020" stroke-width="1"/><g transform="translate(813.8499999999999 536.5) rotate(0)" fill="none" stroke="#ff2020" stroke-width="1.0" vector-effect="non-scaling-stroke" stroke-linejoin="round" shape-rendering="crispEdges"><path vector-effect="non-scaling-stroke" transform="translate(-20.92 -4.64) scale(1.160)" d="M0 0L4 8M4 0L0 8"/><path vector-effect="non-scaling-stroke" transform="translate(-16.78 -4.64) scale(1.160)" d="M0.5 4.5H3.5"/><path vector-effect="non-scaling-stroke" transform="translate(-11.54 -4.64) scale(1.160)" d="M1 1.5L2 0V8"/><path vector-effect="non-scaling-stroke" transform="translate(-7.47 -4.64) scale(1.160)" d="M0 1L1 0H3L4 1V7L3 8H1L0 7Z"/><path vector-effect="non-scaling-stroke" transform="translate(-2.17 -4.64) scale(1.160)" d="M4 0H0.5L0 3.5H3L4 4.5V7L3 8H1L0 7"/><path vector-effect="non-scaling-stroke" transform="translate(3.13 -4.64) scale(1.160)" d="M0 1L1 0H3L4 1V7L3 8H1L0 7Z"/><path vector-effect="non-scaling-stroke" transform="translate(8.43 -4.64) scale(1.160)" d="M3 8V0L0 5.5H4"/><path vector-effect="non-scaling-stroke" transform="translate(12.57 -4.64) scale(1.160)" d="M1.5 7.2V8"/><path vector-effect="non-scaling-stroke" transform="translate(16.28 -4.64) scale(1.160)" d="M0 8L2 0L4 8M0.8 5H3.2"/></g>
<path d="M861.0 574.5H903.2C907.8 574.5 910.2 577.3 910.2 581.5C910.2 585.7 907.8 588.5 903.2 588.5H861.0C856.5 588.5 854.0 585.7 854.0 581.5C854.0 577.3 856.5 574.5 861.0 574.5Z" fill="none" stroke="#ff2020" stroke-width="1"/><g transform="translate(882.1 581.5) rotate(0)" fill="none" stroke="#ff2020" stroke-width="1.0" vector-effect="non-scaling-stroke" stroke-linejoin="round" shape-rendering="crispEdges"><path vector-effect="non-scaling-stroke" transform="translate(-20.63 -4.06) scale(1.015)" d="M0 0L4 8M4 0L0 8"/><path vector-effect="non-scaling-stroke" transform="translate(-16.35 -4.06) scale(1.015)" d="M0.5 4.5H3.5"/><path vector-effect="non-scaling-stroke" transform="translate(-11.25 -4.06) scale(1.015)" d="M1 1.5L2 0V8"/><path vector-effect="non-scaling-stroke" transform="translate(-7.18 -4.06) scale(1.015)" d="M0 1L1 0H3L4 1V7L3 8H1L0 7Z"/><path vector-effect="non-scaling-stroke" transform="translate(-1.88 -4.06) scale(1.015)" d="M4 0H0.5L0 3.5H3L4 4.5V7L3 8H1L0 7"/><path vector-effect="non-scaling-stroke" transform="translate(3.42 -4.06) scale(1.015)" d="M0 1L1 0H3L4 1V7L3 8H1L0 7Z"/><path vector-effect="non-scaling-stroke" transform="translate(8.72 -4.06) scale(1.015)" d="M0 1L1 0H3L4 1V3L3 4H1.5M3 4L4 5V7L3 8H1L0 7"/><path vector-effect="non-scaling-stroke" transform="translate(13.01 -4.06) scale(1.015)" d="M1.5 7.2V8"/><path vector-effect="non-scaling-stroke" transform="translate(16.57 -4.06) scale(1.015)" d="M0 8L2 0L4 8M0.8 5H3.2"/></g>
<path d="M726.4 626.5H765.6C770.8 626.5 773.6 629.7 773.6 634.5C773.6 639.3 770.8 642.5 765.6 642.5H726.4C721.2 642.5 718.4 639.3 718.4 634.5C718.4 629.7 721.2 626.5 726.4 626.5Z" fill="none" stroke="#ff2020" stroke-width="1"/><g transform="translate(746.0 634.5) rotate(0)" fill="none" stroke="#ff2020" stroke-width="1.0" vector-effect="non-scaling-stroke" stroke-linejoin="round" shape-rendering="crispEdges"><path vector-effect="non-scaling-stroke" transform="translate(-19.04 -4.64) scale(1.160)" d="M0 0L4 8M4 0L0 8"/><path vector-effect="non-scaling-stroke" transform="translate(-14.90 -4.64) scale(1.160)" d="M0.5 4.5H3.5"/><path vector-effect="non-scaling-stroke" transform="translate(-9.66 -4.64) scale(1.160)" d="M1 1.5L2 0V8"/><path vector-effect="non-scaling-stroke" transform="translate(-5.58 -4.64) scale(1.160)" d="M0 1L1 0H3L4 1V7L3 8H1L0 7Z"/><path vector-effect="non-scaling-stroke" transform="translate(-0.28 -4.64) scale(1.160)" d="M4 0H0.5L0 3.5H3L4 4.5V7L3 8H1L0 7"/><path vector-effect="non-scaling-stroke" transform="translate(5.02 -4.64) scale(1.160)" d="M0 1L1 0H3L4 1V7L3 8H1L0 7Z"/><path vector-effect="non-scaling-stroke" transform="translate(10.32 -4.64) scale(1.160)" d="M1 1.5L2 0V8"/><path vector-effect="non-scaling-stroke" transform="translate(14.40 -4.64) scale(1.160)" d="M0 0H3L4 1V3L3 4H0M3 4L4 5V7L3 8H0V0"/></g>
<rect x="526.5" y="299.5" width="29.0" height="12.0" fill="none" stroke="#20ff20" stroke-width="1"/><g transform="translate(541.0 305.5) rotate(0)" fill="none" stroke="#20ff20" stroke-width="1.0" vector-effect="non-scaling-stroke" stroke-linejoin="round" shape-rendering="crispEdges"><path vector-effect="non-scaling-stroke" transform="translate(-11.29 -3.48) scale(0.870)" d="M0 8V0H3L4 1V3L3 4H0"/><path vector-effect="non-scaling-stroke" transform="translate(-7.08 -3.48) scale(0.870)" d="M0 3V8M0 4L1 3H3L4 4V8"/><path vector-effect="non-scaling-stroke" transform="translate(-2.87 -3.48) scale(0.870)" d="M0 3V8M0 4.5L1.5 3H3"/><path vector-effect="non-scaling-stroke" transform="translate(0.47 -3.48) scale(0.870)" d="M0.5 4.5H3.5"/><path vector-effect="non-scaling-stroke" transform="translate(4.58 -3.48) scale(0.870)" d="M1 1.5L2 0V8"/><path vector-effect="non-scaling-stroke" transform="translate(7.81 -3.48) scale(0.870)" d="M4 3L3 4H1L0 3V1L1 0H3L4 1V5L3 8H0.5"/></g>
<rect x="620.5" y="242.5" width="29.0" height="12.0" fill="none" stroke="#20ff20" stroke-width="1"/><g transform="translate(635.0 248.5) rotate(0)" fill="none" stroke="#20ff20" stroke-width="1.0" vector-effect="non-scaling-stroke" stroke-linejoin="round" shape-rendering="crispEdges"><path vector-effect="non-scaling-stroke" transform="translate(-11.29 -3.48) scale(0.870)" d="M0 8V0H3L4 1V3L3 4H0"/><path vector-effect="non-scaling-stroke" transform="translate(-7.08 -3.48) scale(0.870)" d="M0 3V8M0 4L1 3H3L4 4V8"/><path vector-effect="non-scaling-stroke" transform="translate(-2.87 -3.48) scale(0.870)" d="M0 3V8M0 4.5L1.5 3H3"/><path vector-effect="non-scaling-stroke" transform="translate(0.47 -3.48) scale(0.870)" d="M0.5 4.5H3.5"/><path vector-effect="non-scaling-stroke" transform="translate(4.58 -3.48) scale(0.870)" d="M1 1.5L2 0V8"/><path vector-effect="non-scaling-stroke" transform="translate(7.81 -3.48) scale(0.870)" d="M1 0H3L4 1V3L3 4H1L0 5V7L1 8H3L4 7V5L3 4H1L0 3V1Z"/></g>
<rect x="672.5" y="245.5" width="29.0" height="11.0" fill="none" stroke="#20ff20" stroke-width="1"/><g transform="translate(687.0 251.0) rotate(0)" fill="none" stroke="#20ff20" stroke-width="1.0" vector-effect="non-scaling-stroke" stroke-linejoin="round" shape-rendering="crispEdges"><path vector-effect="non-scaling-stroke" transform="translate(-11.15 -3.19) scale(0.797)" d="M0 8V0H3L4 1V3L3 4H0"/><path vector-effect="non-scaling-stroke" transform="translate(-6.94 -3.19) scale(0.797)" d="M0 3V8M0 4L1 3H3L4 4V8"/><path vector-effect="non-scaling-stroke" transform="translate(-2.73 -3.19) scale(0.797)" d="M0 3V8M0 4.5L1.5 3H3"/><path vector-effect="non-scaling-stroke" transform="translate(0.68 -3.19) scale(0.797)" d="M0.5 4.5H3.5"/><path vector-effect="non-scaling-stroke" transform="translate(4.72 -3.19) scale(0.797)" d="M1 1.5L2 0V8"/><path vector-effect="non-scaling-stroke" transform="translate(7.96 -3.19) scale(0.797)" d="M0 0H4L1.5 8"/></g>
<rect x="516.5" y="367.5" width="30.0" height="12.0" fill="none" stroke="#20ff20" stroke-width="1"/><g transform="translate(531.5 373.5) rotate(0)" fill="none" stroke="#20ff20" stroke-width="1.0" vector-effect="non-scaling-stroke" stroke-linejoin="round" shape-rendering="crispEdges"><path vector-effect="non-scaling-stroke" transform="translate(-11.50 -3.48) scale(0.870)" d="M0 8V0H3L4 1V3L3 4H0"/><path vector-effect="non-scaling-stroke" transform="translate(-7.20 -3.48) scale(0.870)" d="M0 3V8M0 4L1 3H3L4 4V8"/><path vector-effect="non-scaling-stroke" transform="translate(-2.90 -3.48) scale(0.870)" d="M0 3V8M0 4.5L1.5 3H3"/><path vector-effect="non-scaling-stroke" transform="translate(0.53 -3.48) scale(0.870)" d="M0.5 4.5H3.5"/><path vector-effect="non-scaling-stroke" transform="translate(4.71 -3.48) scale(0.870)" d="M1 1.5L2 0V8"/><path vector-effect="non-scaling-stroke" transform="translate(8.02 -3.48) scale(0.870)" d="M1 0H3L4 1V3L3 4H1L0 5V7L1 8H3L4 7V5L3 4H1L0 3V1Z"/></g>
<rect x="467.5" y="419.5" width="31.0" height="12.0" fill="none" stroke="#20ff20" stroke-width="1"/><g transform="translate(483.0 425.5) rotate(0)" fill="none" stroke="#20ff20" stroke-width="1.0" vector-effect="non-scaling-stroke" stroke-linejoin="round" shape-rendering="crispEdges"><path vector-effect="non-scaling-stroke" transform="translate(-11.99 -3.48) scale(0.870)" d="M0 8V0H3L4 1V3L3 4H0"/><path vector-effect="non-scaling-stroke" transform="translate(-7.69 -3.48) scale(0.870)" d="M0 3V8M0 4L1 3H3L4 4V8"/><path vector-effect="non-scaling-stroke" transform="translate(-3.39 -3.48) scale(0.870)" d="M0 3V8M0 4.5L1.5 3H3"/><path vector-effect="non-scaling-stroke" transform="translate(0.04 -3.48) scale(0.870)" d="M0.5 4.5H3.5"/><path vector-effect="non-scaling-stroke" transform="translate(4.21 -3.48) scale(0.870)" d="M0 1.5L1 0H3L4 1.5V3L0 8H4"/><path vector-effect="non-scaling-stroke" transform="translate(8.51 -3.48) scale(0.870)" d="M0 1L1 0H3L4 1V7L3 8H1L0 7Z"/></g>
<rect x="269.5" y="541.5" width="29.0" height="11.0" fill="none" stroke="#20ff20" stroke-width="1"/><g transform="translate(284.0 547.0) rotate(0)" fill="none" stroke="#20ff20" stroke-width="1.0" vector-effect="non-scaling-stroke" stroke-linejoin="round" shape-rendering="crispEdges"><path vector-effect="non-scaling-stroke" transform="translate(-11.15 -3.19) scale(0.797)" d="M0 8V0H3L4 1V3L3 4H0"/><path vector-effect="non-scaling-stroke" transform="translate(-6.94 -3.19) scale(0.797)" d="M0 3V8M0 4L1 3H3L4 4V8"/><path vector-effect="non-scaling-stroke" transform="translate(-2.73 -3.19) scale(0.797)" d="M0 3V8M0 4.5L1.5 3H3"/><path vector-effect="non-scaling-stroke" transform="translate(0.68 -3.19) scale(0.797)" d="M0.5 4.5H3.5"/><path vector-effect="non-scaling-stroke" transform="translate(4.72 -3.19) scale(0.797)" d="M1 1.5L2 0V8"/><path vector-effect="non-scaling-stroke" transform="translate(7.96 -3.19) scale(0.797)" d="M1 0H3L4 1V3L3 4H1L0 5V7L1 8H3L4 7V5L3 4H1L0 3V1Z"/></g>
<rect x="922.5" y="342.5" width="31.0" height="11.0" fill="none" stroke="#20ff20" stroke-width="1"/><g transform="translate(938.0 348.0) rotate(0)" fill="none" stroke="#20ff20" stroke-width="1.0" vector-effect="non-scaling-stroke" stroke-linejoin="round" shape-rendering="crispEdges"><path vector-effect="non-scaling-stroke" transform="translate(-11.35 -3.19) scale(0.797)" d="M0 8V0H3L4 1V3L3 4H0"/><path vector-effect="non-scaling-stroke" transform="translate(-7.05 -3.19) scale(0.797)" d="M0 3V8M0 4L1 3H3L4 4V8"/><path vector-effect="non-scaling-stroke" transform="translate(-2.75 -3.19) scale(0.797)" d="M0 3V8M0 4.5L1.5 3H3"/><path vector-effect="non-scaling-stroke" transform="translate(0.75 -3.19) scale(0.797)" d="M0.5 4.5H3.5"/><path vector-effect="non-scaling-stroke" transform="translate(4.86 -3.19) scale(0.797)" d="M1 1.5L2 0V8"/><path vector-effect="non-scaling-stroke" transform="translate(8.16 -3.19) scale(0.797)" d="M4 3L3 4H1L0 3V1L1 0H3L4 1V5L3 8H0.5"/></g>
<rect x="869.5" y="600.5" width="29.0" height="11.0" fill="none" stroke="#20ff20" stroke-width="1"/><g transform="translate(884.0 606.0) rotate(0)" fill="none" stroke="#20ff20" stroke-width="1.0" vector-effect="non-scaling-stroke" stroke-linejoin="round" shape-rendering="crispEdges"><path vector-effect="non-scaling-stroke" transform="translate(-11.15 -3.19) scale(0.797)" d="M0 8V0H3L4 1V3L3 4H0"/><path vector-effect="non-scaling-stroke" transform="translate(-6.94 -3.19) scale(0.797)" d="M0 3V8M0 4L1 3H3L4 4V8"/><path vector-effect="non-scaling-stroke" transform="translate(-2.73 -3.19) scale(0.797)" d="M0 3V8M0 4.5L1.5 3H3"/><path vector-effect="non-scaling-stroke" transform="translate(0.68 -3.19) scale(0.797)" d="M0.5 4.5H3.5"/><path vector-effect="non-scaling-stroke" transform="translate(4.72 -3.19) scale(0.797)" d="M1 1.5L2 0V8"/><path vector-effect="non-scaling-stroke" transform="translate(7.96 -3.19) scale(0.797)" d="M0 1L1 0H3L4 1V3L3 4H1.5M3 4L4 5V7L3 8H1L0 7"/></g>
<rect x="733.5" y="644.5" width="26.0" height="10.0" fill="none" stroke="#20ff20" stroke-width="1"/><g transform="translate(746.5 649.5) rotate(0)" fill="none" stroke="#20ff20" stroke-width="1.0" vector-effect="non-scaling-stroke" stroke-linejoin="round" shape-rendering="crispEdges"><path vector-effect="non-scaling-stroke" transform="translate(-9.55 -2.90) scale(0.725)" d="M0 8V0H3L4 1V3L3 4H0"/><path vector-effect="non-scaling-stroke" transform="translate(-5.25 -2.90) scale(0.725)" d="M0 3V8M0 4L1 3H3L4 4V8"/><path vector-effect="non-scaling-stroke" transform="translate(-0.95 -2.90) scale(0.725)" d="M0 3V8M0 4.5L1.5 3H3"/><path vector-effect="non-scaling-stroke" transform="translate(2.62 -2.90) scale(0.725)" d="M0.5 4.5H3.5"/><path vector-effect="non-scaling-stroke" transform="translate(6.65 -2.90) scale(0.725)" d="M1 0H3L4 1V3L3 4H1L0 5V7L1 8H3L4 7V5L3 4H1L0 3V1Z"/></g>
<rect x="376.5" y="657.5" width="31.0" height="11.0" fill="none" stroke="#20ff20" stroke-width="1"/><g transform="translate(392.0 663.0) rotate(0)" fill="none" stroke="#20ff20" stroke-width="1.0" vector-effect="non-scaling-stroke" stroke-linejoin="round" shape-rendering="crispEdges"><path vector-effect="non-scaling-stroke" transform="translate(-11.85 -3.19) scale(0.797)" d="M0 8V0H3L4 1V3L3 4H0"/><path vector-effect="non-scaling-stroke" transform="translate(-7.55 -3.19) scale(0.797)" d="M0 3V8M0 4L1 3H3L4 4V8"/><path vector-effect="non-scaling-stroke" transform="translate(-3.25 -3.19) scale(0.797)" d="M0 3V8M0 4.5L1.5 3H3"/><path vector-effect="non-scaling-stroke" transform="translate(0.25 -3.19) scale(0.797)" d="M0.5 4.5H3.5"/><path vector-effect="non-scaling-stroke" transform="translate(4.36 -3.19) scale(0.797)" d="M0 1.5L1 0H3L4 1.5V3L0 8H4"/><path vector-effect="non-scaling-stroke" transform="translate(8.66 -3.19) scale(0.797)" d="M0 1L1 0H3L4 1V7L3 8H1L0 7Z"/></g>
<rect x="797.5" y="555.5" width="29.0" height="11.0" fill="none" stroke="#f4e400" stroke-width="1"/><g transform="translate(812.0 561.0) rotate(0)" fill="none" stroke="#f4e400" stroke-width="1.0" vector-effect="non-scaling-stroke" stroke-linejoin="round" shape-rendering="crispEdges"><path vector-effect="non-scaling-stroke" transform="translate(-11.15 -3.19) scale(0.797)" d="M0 8V0H3L4 1V3L3 4H0"/><path vector-effect="non-scaling-stroke" transform="translate(-6.94 -3.19) scale(0.797)" d="M0 3V8M0 4L1 3H3L4 4V8"/><path vector-effect="non-scaling-stroke" transform="translate(-2.73 -3.19) scale(0.797)" d="M0 3V8M0 4.5L1.5 3H3"/><path vector-effect="non-scaling-stroke" transform="translate(0.68 -3.19) scale(0.797)" d="M0.5 4.5H3.5"/><path vector-effect="non-scaling-stroke" transform="translate(4.72 -3.19) scale(0.797)" d="M0 1.5L1 0H3L4 1.5V3L0 8H4"/><path vector-effect="non-scaling-stroke" transform="translate(8.93 -3.19) scale(0.797)" d="M1 1.5L2 0V8"/></g>
<rect x="793.1" y="551.3" width="36.7" height="18.4" fill="none" stroke="#22c8f4" stroke-width="1.2" stroke-dasharray="1.3 1.3"/>
<g transform="translate(-2 0) rotate(30 400 648)">
<rect x="396.5" y="627.5" width="7" height="14" rx="2" fill="#1b185e" stroke="#ffffff" stroke-width="1.1"/>
<path d="M393.5 642H406.5V675H393.5Z" fill="#f4f4ff"/>
<path d="M393.5 641.5H406.5" stroke="#20a060" stroke-width="2"/>
<path d="M394 645.5H406M394 651.5H406M394 657.5H406" stroke="#f01c1c" stroke-width="1.1" stroke-dasharray="2 1.5"/>
<path d="M394 648.5H406M394 654.5H406M394 660.5H406" stroke="#1e48ff" stroke-width="1.1" stroke-dasharray="2 1.5"/>
<path d="M393.5 664H406.5" stroke="#20c040" stroke-width="1.2"/><path d="M393.5 668H406.5V676H393.5Z" fill="#1e48ff"/>
</g>
</svg></div>
<div id="rtb" class="a">
<svg style="left:0;top:0" width="33" height="545" viewBox="978 123 33 545">
<defs>
<linearGradient id="playg" x1="0" y1="0" x2="1" y2="1"><stop offset="0" stop-color="#f4f0e6"/><stop offset="0.35" stop-color="#c8bb9e"/><stop offset="1" stop-color="#9c8c6c"/></linearGradient>
</defs>
<path d="M986 151L1002 162L986 172.5Z" fill="url(#playg)" stroke="#a89878" stroke-width="0.8"/>
<!-- window -->
<rect x="984.5" y="185.5" width="17" height="11" fill="#fff" stroke="#000" stroke-width="1.2"/>
<rect x="986.5" y="187.5" width="17" height="11" fill="#fff" stroke="#000" stroke-width="1.2"/>
<path d="M995.5 198.5V195.5H1003.5" fill="none" stroke="#000" stroke-width="1.2"/>
<!-- 3 squares -->
<g fill="#dbe8fb" stroke="#222" stroke-width="1"><rect x="984.5" y="212.5" width="9" height="9"/><rect x="984.5" y="223.5" width="9" height="9"/><rect x="995.5" y="223.5" width="9" height="9"/></g>
<g fill="none" stroke="#1a70e8" stroke-width="1.2"><path d="M987 215H991V219H988"/><rect x="987" y="227" width="4" height="2.5"/><path d="M998 227H1002V230H999V226"/></g>
<!-- dim 5 -->
<path d="M984.5 256V245.5H1003.5V256" fill="none" stroke="#a8a49a" stroke-width="1"/>
<path d="M985.5 256V246.5H1002.5V256" fill="none" stroke="#fff" stroke-width="1"/>
<path d="M985 253.5H1003M985 253.5L988 251.5M985 253.5L988 255.5M1003 253.5L1000 251.5M1003 253.5L1000 255.5M984.5 250V258M1003.5 250V258" stroke="#f0e000" stroke-width="1.5" fill="none"/>
<path d="M990.5 253.5H997.5" stroke="#1b3a80" stroke-width="0" />
<text x="994" y="257.5" font-size="9.5" font-weight="bold" fill="#f0e000" stroke="#6a5a00" stroke-width="0.5" text-anchor="middle">5</text>
<!-- dim 3 -->
<path d="M984.5 284V274.5H1003.5V284" fill="none" stroke="#a8a49a" stroke-width="1"/>
<path d="M985.5 284V275.5H1002.5V284" fill="none" stroke="#fff" stroke-width="1"/>
<path d="M985 281.5H1003M985 281.5L988 279.5M985 281.5L988 283.5M1003 281.5L1000 279.5M1003 281.5L1000 283.5M984.5 278V286M1003.5 278V286" stroke="#f0e000" stroke-width="1.5" fill="none"/>
<path d="M990.5 285L997.5 277" stroke="#e81010" stroke-width="2"/>
<text x="994" y="293.5" font-size="9.5" font-weight="bold" fill="#e81010" text-anchor="middle">3</text>
<!-- ABC -->
<rect x="984.5" y="305.5" width="20" height="12" fill="#f2f4fa" stroke="#222"/>
<text x="994.5" y="315.5" font-size="10" fill="#000" text-anchor="middle" textLength="17" lengthAdjust="spacingAndGlyphs">ABC</text>
<!-- pink tag -->
<path d="M984.5 336.5H994.5L998 342L994.5 347.5H984.5Z" fill="#f8e0f4" stroke="#d010b0" stroke-width="1.4"/>
<path d="M998 342L1003 341H1006" stroke="#d010b0" stroke-width="1.2"/>
<text x="989.5" y="346" font-size="8" font-weight="bold" fill="#d010b0" text-anchor="middle">A</text>
<!-- star lines -->
<path d="M985 372L1003 366M987 380L1004 372M992 359L995 368L998 380M985 376L994 365L1001 364" stroke="#222" stroke-width="1" fill="none"/>
<!-- table -->
<rect x="984.5" y="394.5" width="20" height="16" fill="#c8c8c8" stroke="#444"/>
<path d="M987 397H991M993 397H997M999 397H1003" stroke="#20d040" stroke-width="1.6"/>
<path d="M985 400H1004M985 404H1004M985 407.5H1004M990.5 400V410M997.5 400V410" stroke="#888" stroke-width="0.8"/>
<!-- shapes -->
<circle cx="1000" cy="426" r="3" fill="none" stroke="#e020b0" stroke-width="1.2"/>
<rect x="996.5" y="432.5" width="7" height="7" fill="#e8f0fb" stroke="#1030c0" stroke-width="1.2"/>
<path d="M991 423L986 428L990 431L986 435" fill="none" stroke="#222" stroke-width="1"/>
<path d="M986 439H992" stroke="#e020b0" stroke-width="1.4"/>
<!-- crosshair -->
<circle cx="999" cy="459" r="5" fill="#f8f0a0" stroke="#e8d800" stroke-width="1.3"/>
<path d="M999 452V466M992 459H1006" stroke="#e8d800" stroke-width="1.3"/>
<rect x="984.5" y="464.5" width="11" height="6" fill="#fff" stroke="#1030c0" stroke-width="1.3"/>
<path d="M988 467.5H992" stroke="#e8d800" stroke-width="1.4"/>
<!-- hatched -->
<defs><pattern id="hatch" width="3" height="3" patternUnits="userSpaceOnUse" patternTransform="rotate(45)"><rect width="3" height="3" fill="#fff"/><rect width="1.6" height="3" fill="#3050d8"/></pattern></defs>
<rect x="984.5" y="482.5" width="18" height="17" fill="url(#hatch)" stroke="#111"/>
<circle cx="993.5" cy="491" r="4" fill="#e0e8f8" stroke="#111"/>
<!-- network -->
<path d="M986 520L993 516L1001 512M993 516L1002 518M993 516L1001 525M993 516L991 530M993 516L986 531" stroke="#333" stroke-width="1" fill="none"/>
<g fill="#e01818"><circle cx="993" cy="516" r="2.2"/><circle cx="1001" cy="512" r="2.2"/><circle cx="1002" cy="518.5" r="2.2"/><circle cx="1001" cy="525.5" r="2.2"/><circle cx="991" cy="530" r="2.2"/><circle cx="986" cy="530.5" r="2.2"/></g>
</svg>
</div>
<div id="bot" class="a">
<div class="a" style="left:0;top:0;width:1011px;height:35px;background:linear-gradient(90deg,#b2c7f0,#c4d5f5 50%,#d3dff8)"></div>
<div class="a" style="left:0;top:0;width:398px;height:35px;background:linear-gradient(#e6eefb 0%,#d3e0f9 30%,#b3c9f1 70%,#8fb0e8 100%);border-radius:0 3px 3px 0"></div>
<div class="a grip" style="left:1px;top:6px;height:23px"></div>
<div class="a" style="left:9px;top:8px;width:378px;height:20px;background:#fff;border:1px solid #7f9db9"></div>
<div class="a" style="left:370px;top:9px;width:16px;height:18px;border-radius:2px;background:linear-gradient(#d4e0fb,#b6cbf6)"></div>
<svg style="left:374px;top:15px" width="9" height="6"><path d="M1 1L4.5 4.5L8 1" stroke="#4d6185" stroke-width="2" fill="none"/></svg>
</div>
<div id="status" class="a">
<div class="a" style="left:0;top:0;width:1011px;height:2px;background:#f4f1e2"></div><div class="a" style="left:0;top:2px;width:1011px;height:1px;background:#a9a0b8"></div><div class="a" style="left:0;top:3px;width:1011px;height:3px;background:#f2efe0"></div>

<div class="a sb2" style="left:724px;width:24px;background:#fff;padding-left:7px">1</div>
<div class="a sb2" style="left:750px;width:25px;padding-left:5px">All</div>
<div class="a sb2" style="left:777px;width:62px;padding-left:5px">not active</div>
<div class="a sb2" style="left:841px;width:74px;padding-left:5px">mm | deg | g</div>
<div class="a sb2" style="left:917px;width:47px;padding-left:5px">no grid</div>
<div class="a sb2" style="left:966px;width:26px"></div>
<svg style="left:966px;top:2px" width="26" height="18"><path d="M6 9L11 4V14Z M15 4L20 9L15 14Z" fill="#111"/></svg>
<svg style="left:995px;top:4px" width="16" height="16"><path d="M15 4L4 15M15 8L8 15M15 12L12 15" stroke="#fff" stroke-width="1"/><path d="M15 5L5 15M15 9L9 15M15 13L13 15" stroke="#aca899" stroke-width="1"/></svg>
</div>

</body></html>
